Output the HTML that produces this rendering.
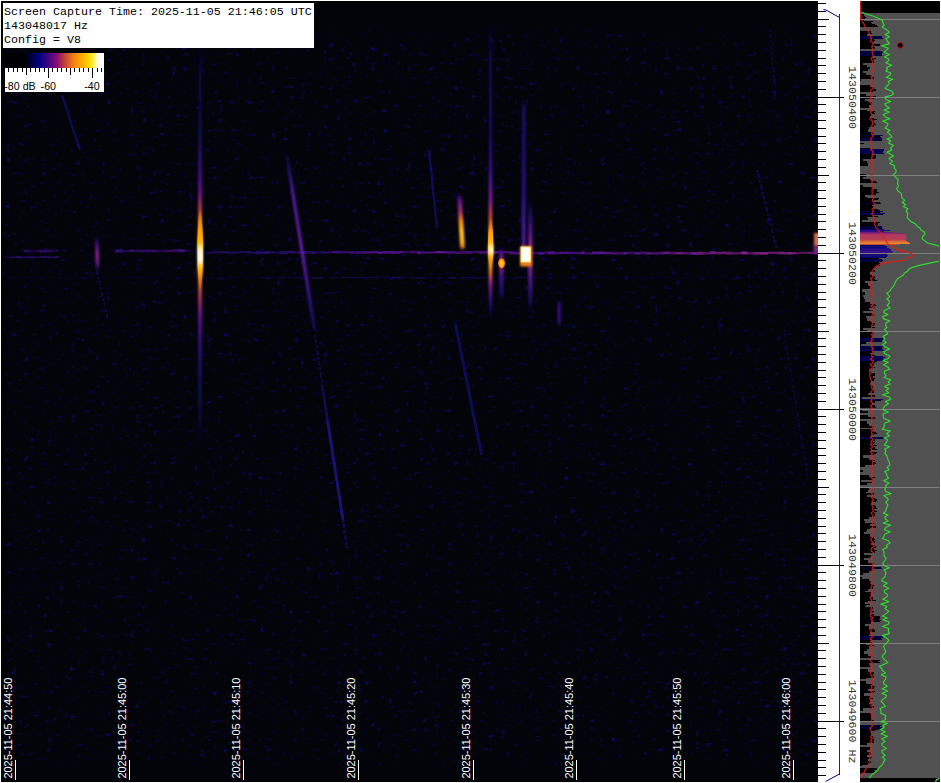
<!DOCTYPE html>
<html><head><meta charset="utf-8"><title>Spectrogram</title>
<style>
html,body{margin:0;padding:0;background:#fff;overflow:hidden}
svg{display:block}
.mono{font-family:"Liberation Mono","DejaVu Sans Mono",monospace;font-size:11.67px;fill:#000}
.sans{font-family:"Liberation Sans","DejaVu Sans",sans-serif;font-size:10.67px}
</style></head><body>
<svg width="941" height="783" viewBox="0 0 941 783">
<defs>
<filter id="noise" x="0" y="0" width="100%" height="100%" color-interpolation-filters="sRGB">
<feTurbulence type="fractalNoise" baseFrequency="0.17 0.21" numOctaves="2" seed="11" result="t"/>
<feColorMatrix in="t" type="matrix" values="0 0 0 0 0.035  0 0 0 0 0.035  0 0 0 0 0.45  3.5 0 0 0 -2.27"/>
</filter>
<filter id="b1" x="-50%" y="-5%" width="200%" height="110%"><feGaussianBlur stdDeviation="0.95 1.5"/></filter>
<filter id="b2" x="-20%" y="-20%" width="140%" height="140%"><feGaussianBlur stdDeviation="0.7"/></filter>
<filter id="b4" x="-50%" y="-30%" width="200%" height="160%"><feGaussianBlur stdDeviation="1"/></filter>
<filter id="b3" x="-5%" y="-100%" width="110%" height="300%"><feGaussianBlur stdDeviation="0.7 0.6"/></filter>
<linearGradient id="cbar" x1="0" x2="1" y1="0" y2="0">
<stop offset="0" stop-color="#000"/><stop offset="0.2" stop-color="#000004"/><stop offset="0.275" stop-color="#00004a"/><stop offset="0.345" stop-color="#020282"/>
<stop offset="0.43" stop-color="#3a0582"/><stop offset="0.52" stop-color="#860a78"/><stop offset="0.60" stop-color="#c0403a"/><stop offset="0.70" stop-color="#f58410"/>
<stop offset="0.79" stop-color="#ffb400"/><stop offset="0.87" stop-color="#ffe60a"/><stop offset="0.93" stop-color="#fffbd0"/><stop offset="0.95" stop-color="#fff"/><stop offset="1" stop-color="#fff"/>
</linearGradient>
</defs>
<rect x="0" y="0" width="941" height="783" fill="#fff"/>
<rect x="1" y="1" width="817" height="781" fill="#000"/>
<rect x="3" y="3" width="815" height="777" fill="#03030a"/>
<rect x="3" y="3" width="815" height="777" filter="url(#noise)"/>
<linearGradient id="fadeT" x1="0" y1="0" x2="0" y2="1"><stop offset="0" stop-color="#03030a" stop-opacity="1"/><stop offset="0.5" stop-color="#03030a" stop-opacity="1"/><stop offset="1" stop-color="#03030a" stop-opacity="0"/></linearGradient>
<linearGradient id="fadeB" x1="0" y1="0" x2="0" y2="1"><stop offset="0" stop-color="#03030a" stop-opacity="0"/><stop offset="0.6" stop-color="#03030a" stop-opacity="0.9"/><stop offset="1" stop-color="#03030a" stop-opacity="1"/></linearGradient>
<rect x="3" y="3" width="815" height="40" fill="url(#fadeT)"/><rect x="3" y="752" width="815" height="28" fill="url(#fadeB)"/>
<defs>
<linearGradient id="g1" x1="0" y1="0" x2="0" y2="1"><stop offset="0" stop-color="#201080" stop-opacity="0"/><stop offset="0.2" stop-color="#4a1490" stop-opacity="0.8"/><stop offset="0.5" stop-color="#8a2090" stop-opacity="1"/><stop offset="0.75" stop-color="#7a2090" stop-opacity="0.9"/><stop offset="1" stop-color="#201080" stop-opacity="0"/></linearGradient>
<linearGradient id="g2" x1="0" y1="0" x2="0" y2="1"><stop offset="0" stop-color="#1a1a8a" stop-opacity="0.0"/><stop offset="0.1" stop-color="#2a1a90" stop-opacity="0.55"/><stop offset="0.22" stop-color="#501a9c" stop-opacity="0.95"/><stop offset="0.55" stop-color="#621ea0" stop-opacity="1"/><stop offset="0.8" stop-color="#3e189a" stop-opacity="0.85"/><stop offset="1" stop-color="#1a1a90" stop-opacity="0.5"/></linearGradient>
<linearGradient id="g3" x1="0" y1="0" x2="0" y2="1"><stop offset="0" stop-color="#10108a" stop-opacity="0"/><stop offset="0.06" stop-color="#16128a" stop-opacity="0.3"/><stop offset="0.22" stop-color="#1c128c" stop-opacity="0.4"/><stop offset="0.3" stop-color="#3a1090" stop-opacity="0.7"/><stop offset="0.38" stop-color="#6a1490" stop-opacity="1"/><stop offset="0.42" stop-color="#b03a50" stop-opacity="1"/><stop offset="0.45" stop-color="#f08010" stop-opacity="1"/><stop offset="0.5" stop-color="#ffb000" stop-opacity="1"/><stop offset="0.53" stop-color="#ffb000" stop-opacity="1"/><stop offset="0.58" stop-color="#f08010" stop-opacity="1"/><stop offset="0.63" stop-color="#b03a50" stop-opacity="1"/><stop offset="0.68" stop-color="#6a1490" stop-opacity="1"/><stop offset="0.75" stop-color="#3a1090" stop-opacity="0.8"/><stop offset="0.85" stop-color="#1c128a" stop-opacity="0.5"/><stop offset="0.95" stop-color="#18128a" stop-opacity="0.3"/><stop offset="1" stop-color="#10108a" stop-opacity="0"/></linearGradient>
<linearGradient id="lens" x1="0" y1="0" x2="0" y2="1"><stop offset="0" stop-color="#f08010" stop-opacity="0.2"/><stop offset="0.25" stop-color="#ff9c08" stop-opacity="1"/><stop offset="0.5" stop-color="#ffc010" stop-opacity="1"/><stop offset="0.75" stop-color="#ff9c08" stop-opacity="1"/><stop offset="1" stop-color="#f08010" stop-opacity="0.2"/></linearGradient>
<linearGradient id="g4" x1="0" y1="0" x2="0" y2="1"><stop offset="0" stop-color="#ff9000" stop-opacity="0"/><stop offset="0.3" stop-color="#ffc000" stop-opacity="1"/><stop offset="0.4" stop-color="#fff0a0" stop-opacity="1"/><stop offset="0.5" stop-color="#fff" stop-opacity="1"/><stop offset="0.66" stop-color="#fff" stop-opacity="1"/><stop offset="0.75" stop-color="#ffd040" stop-opacity="1"/><stop offset="1" stop-color="#ff9000" stop-opacity="0"/></linearGradient>
<linearGradient id="g5" x1="0" y1="0" x2="0" y2="1"><stop offset="0" stop-color="#3a1090" stop-opacity="0"/><stop offset="0.12" stop-color="#5a1494" stop-opacity="0.9"/><stop offset="0.35" stop-color="#a03060" stop-opacity="1"/><stop offset="0.5" stop-color="#f08a10" stop-opacity="1"/><stop offset="0.68" stop-color="#ffc028" stop-opacity="1"/><stop offset="0.85" stop-color="#ffb820" stop-opacity="1"/><stop offset="0.95" stop-color="#f08a10" stop-opacity="1"/><stop offset="1" stop-color="#c04a30" stop-opacity="0.6"/></linearGradient>
<linearGradient id="g6" x1="0" y1="0" x2="0" y2="1"><stop offset="0" stop-color="#10108a" stop-opacity="0"/><stop offset="0.08" stop-color="#1c128c" stop-opacity="0.3"/><stop offset="0.4" stop-color="#2c1492" stop-opacity="0.5"/><stop offset="0.52" stop-color="#44149a" stop-opacity="0.85"/><stop offset="0.6" stop-color="#7a1a90" stop-opacity="1"/><stop offset="0.66" stop-color="#c04a40" stop-opacity="1"/><stop offset="0.72" stop-color="#f59010" stop-opacity="1"/><stop offset="0.76" stop-color="#ffc020" stop-opacity="1"/><stop offset="0.8" stop-color="#ffc020" stop-opacity="1"/><stop offset="0.84" stop-color="#e07020" stop-opacity="1"/><stop offset="0.88" stop-color="#8a2090" stop-opacity="1"/><stop offset="0.94" stop-color="#30128e" stop-opacity="0.7"/><stop offset="1" stop-color="#10108a" stop-opacity="0"/></linearGradient>
<linearGradient id="g7" x1="0" y1="0" x2="0" y2="1"><stop offset="0" stop-color="#ffb000" stop-opacity="0"/><stop offset="0.3" stop-color="#ffe680" stop-opacity="1"/><stop offset="0.5" stop-color="#fff" stop-opacity="1"/><stop offset="0.7" stop-color="#ffe680" stop-opacity="1"/><stop offset="1" stop-color="#ffb000" stop-opacity="0"/></linearGradient>
<linearGradient id="g8" x1="0" y1="0" x2="0" y2="1"><stop offset="0" stop-color="#30108a" stop-opacity="0"/><stop offset="0.12" stop-color="#4a1490" stop-opacity="0.8"/><stop offset="0.2" stop-color="#7a2080" stop-opacity="0.9"/><stop offset="0.42" stop-color="#7a2080" stop-opacity="0.9"/><stop offset="0.55" stop-color="#44149a" stop-opacity="0.8"/><stop offset="0.8" stop-color="#28149a" stop-opacity="0.6"/><stop offset="1" stop-color="#20108a" stop-opacity="0"/></linearGradient>
<radialGradient id="blobc"><stop offset="0" stop-color="#ffd030"/><stop offset="0.5" stop-color="#ffb818"/><stop offset="0.85" stop-color="#e87818"/><stop offset="1" stop-color="#c05030" stop-opacity="0.7"/></radialGradient>
<linearGradient id="g9" x1="0" y1="0" x2="0" y2="1"><stop offset="0" stop-color="#10108a" stop-opacity="0"/><stop offset="0.08" stop-color="#24149a" stop-opacity="0.5"/><stop offset="0.6" stop-color="#30169a" stop-opacity="0.7"/><stop offset="0.85" stop-color="#44189a" stop-opacity="0.9"/><stop offset="1" stop-color="#5a1a96" stop-opacity="0.95"/></linearGradient>
<linearGradient id="g10" x1="0" y1="0" x2="0" y2="1"><stop offset="0" stop-color="#10108a" stop-opacity="0"/><stop offset="0.15" stop-color="#2c128c" stop-opacity="0.7"/><stop offset="0.3" stop-color="#5a1a92" stop-opacity="0.9"/><stop offset="0.4" stop-color="#8a2488" stop-opacity="1"/><stop offset="0.58" stop-color="#8a2488" stop-opacity="1"/><stop offset="0.68" stop-color="#5a1a92" stop-opacity="0.9"/><stop offset="0.85" stop-color="#2c128c" stop-opacity="0.7"/><stop offset="1" stop-color="#10108a" stop-opacity="0"/></linearGradient>
<linearGradient id="g11" x1="0" y1="0" x2="0" y2="1"><stop offset="0" stop-color="#14148a" stop-opacity="0"/><stop offset="0.2" stop-color="#38149a" stop-opacity="0.9"/><stop offset="0.8" stop-color="#38149a" stop-opacity="0.9"/><stop offset="1" stop-color="#14148a" stop-opacity="0"/></linearGradient>
</defs>
<g clip-path="url(#spclip)">
<clipPath id="spclip"><rect x="3" y="3" width="815" height="777"/></clipPath>
<g filter="url(#b3)"><rect x="16.7" y="249.89" width="7.4" height="2.25" fill="#2c0b81" fill-opacity="0.06"/><rect x="23.8" y="249.51" width="6.3" height="2.83" fill="#391087" fill-opacity="0.61"/><rect x="29.8" y="249.77" width="6.5" height="2.68" fill="#3a1088" fill-opacity="0.37"/><rect x="36.0" y="249.91" width="4.5" height="2.56" fill="#3a1088" fill-opacity="0.36"/><rect x="40.1" y="249.57" width="6.8" height="3.00" fill="#3a1088" fill-opacity="0.64"/><rect x="46.6" y="249.35" width="5.0" height="3.02" fill="#3a1088" fill-opacity="0.60"/><rect x="51.2" y="249.45" width="7.6" height="2.31" fill="#3a1088" fill-opacity="0.36"/><rect x="58.6" y="249.80" width="8.1" height="2.40" fill="#2d0b82" fill-opacity="0.09"/><rect x="109.4" y="249.86" width="6.2" height="2.42" fill="#310d83" fill-opacity="0.17"/><rect x="115.3" y="249.37" width="7.6" height="3.08" fill="#3a1088" fill-opacity="0.77"/><rect x="122.7" y="249.91" width="4.5" height="2.13" fill="#3c1088" fill-opacity="0.42"/><rect x="126.9" y="249.86" width="3.9" height="2.25" fill="#3d1088" fill-opacity="0.56"/><rect x="130.4" y="249.23" width="3.0" height="3.04" fill="#3e1088" fill-opacity="0.74"/><rect x="133.2" y="249.56" width="7.7" height="2.61" fill="#3f1189" fill-opacity="0.55"/><rect x="140.6" y="249.59" width="6.3" height="2.71" fill="#411189" fill-opacity="0.64"/><rect x="146.7" y="249.44" width="8.0" height="2.81" fill="#421189" fill-opacity="0.61"/><rect x="154.3" y="249.98" width="4.1" height="2.61" fill="#441189" fill-opacity="0.53"/><rect x="158.1" y="249.50" width="5.8" height="2.67" fill="#451189" fill-opacity="0.42"/><rect x="163.6" y="249.93" width="2.9" height="2.16" fill="#461189" fill-opacity="0.67"/><rect x="166.3" y="249.82" width="6.3" height="2.45" fill="#47128a" fill-opacity="0.61"/><rect x="172.2" y="249.44" width="6.7" height="2.16" fill="#48128a" fill-opacity="0.73"/><rect x="178.6" y="249.43" width="6.5" height="2.55" fill="#4a128a" fill-opacity="0.83"/><rect x="184.8" y="249.59" width="6.1" height="2.41" fill="#3c0e86" fill-opacity="0.35"/><rect x="190.6" y="251.01" width="4.8" height="2.47" fill="#2e0b81" fill-opacity="0.18"/><rect x="195.1" y="251.05" width="7.0" height="2.82" fill="#2b0b82" fill-opacity="0.14"/><rect x="201.9" y="251.48" width="4.5" height="2.33" fill="#2d0d86" fill-opacity="0.29"/><rect x="206.1" y="251.46" width="3.8" height="2.20" fill="#2f0f88" fill-opacity="0.44"/><rect x="209.6" y="251.40" width="4.6" height="2.53" fill="#30108a" fill-opacity="0.48"/><rect x="213.9" y="250.90" width="7.5" height="2.74" fill="#30108a" fill-opacity="0.42"/><rect x="221.1" y="251.07" width="7.7" height="2.22" fill="#31108a" fill-opacity="0.53"/><rect x="228.4" y="251.18" width="5.7" height="2.92" fill="#31108a" fill-opacity="0.43"/><rect x="233.8" y="251.28" width="3.8" height="2.73" fill="#31108a" fill-opacity="0.47"/><rect x="237.4" y="250.91" width="7.2" height="2.39" fill="#32108a" fill-opacity="0.49"/><rect x="244.3" y="251.02" width="7.2" height="2.51" fill="#32108a" fill-opacity="0.47"/><rect x="251.2" y="251.61" width="5.1" height="2.25" fill="#33108a" fill-opacity="0.52"/><rect x="256.0" y="251.17" width="2.8" height="3.07" fill="#33108a" fill-opacity="0.72"/><rect x="258.5" y="251.58" width="5.2" height="2.32" fill="#33108a" fill-opacity="0.73"/><rect x="263.4" y="251.23" width="6.9" height="2.61" fill="#33108a" fill-opacity="0.69"/><rect x="270.0" y="251.10" width="4.4" height="2.17" fill="#34108a" fill-opacity="0.51"/><rect x="274.1" y="251.58" width="6.0" height="2.14" fill="#34108a" fill-opacity="0.49"/><rect x="279.8" y="251.25" width="7.8" height="2.98" fill="#34108a" fill-opacity="0.64"/><rect x="287.3" y="250.60" width="7.7" height="2.83" fill="#35108a" fill-opacity="0.60"/><rect x="294.7" y="251.22" width="3.7" height="2.61" fill="#35108a" fill-opacity="0.50"/><rect x="298.2" y="251.27" width="5.1" height="2.43" fill="#35108a" fill-opacity="0.75"/><rect x="302.9" y="250.95" width="4.2" height="2.87" fill="#36108a" fill-opacity="0.72"/><rect x="306.8" y="250.98" width="4.7" height="2.90" fill="#36108a" fill-opacity="0.47"/><rect x="311.3" y="251.29" width="3.7" height="2.89" fill="#36108a" fill-opacity="0.70"/><rect x="314.7" y="251.03" width="7.3" height="2.95" fill="#39108a" fill-opacity="0.41"/><rect x="321.7" y="250.91" width="3.1" height="2.62" fill="#3c118b" fill-opacity="0.54"/><rect x="324.5" y="251.57" width="5.1" height="2.10" fill="#3e118b" fill-opacity="0.64"/><rect x="329.3" y="251.02" width="3.1" height="2.17" fill="#40118b" fill-opacity="0.50"/><rect x="332.1" y="250.77" width="8.2" height="2.59" fill="#43118b" fill-opacity="0.85"/><rect x="340.0" y="250.91" width="4.5" height="2.73" fill="#46128c" fill-opacity="0.63"/><rect x="344.2" y="250.94" width="6.0" height="2.42" fill="#48128c" fill-opacity="0.67"/><rect x="350.0" y="251.34" width="3.5" height="2.47" fill="#4a128c" fill-opacity="0.77"/><rect x="353.1" y="250.95" width="3.2" height="2.69" fill="#4b128d" fill-opacity="0.59"/><rect x="356.1" y="251.29" width="7.1" height="2.71" fill="#4c128d" fill-opacity="0.69"/><rect x="362.9" y="251.00" width="5.2" height="2.79" fill="#4e138d" fill-opacity="0.69"/><rect x="367.8" y="251.20" width="5.1" height="2.34" fill="#4f138e" fill-opacity="0.85"/><rect x="372.6" y="250.80" width="5.7" height="2.52" fill="#50138e" fill-opacity="0.85"/><rect x="378.0" y="251.52" width="5.1" height="2.47" fill="#52138e" fill-opacity="0.94"/><rect x="382.9" y="250.93" width="7.7" height="2.55" fill="#53138f" fill-opacity="0.90"/><rect x="390.3" y="251.05" width="3.5" height="2.97" fill="#55138f" fill-opacity="0.91"/><rect x="393.5" y="251.26" width="7.2" height="2.65" fill="#56148f" fill-opacity="0.83"/><rect x="400.3" y="250.88" width="3.4" height="2.24" fill="#58148f" fill-opacity="0.79"/><rect x="403.4" y="250.97" width="7.1" height="2.20" fill="#591490" fill-opacity="0.52"/><rect x="410.2" y="250.56" width="7.6" height="2.92" fill="#5a1490" fill-opacity="0.59"/><rect x="417.5" y="251.08" width="3.5" height="2.92" fill="#5a1490" fill-opacity="0.92"/><rect x="420.7" y="251.57" width="8.0" height="2.14" fill="#5a1490" fill-opacity="0.79"/><rect x="428.4" y="251.47" width="7.0" height="2.20" fill="#5a1490" fill-opacity="0.76"/><rect x="435.1" y="250.84" width="6.9" height="2.42" fill="#5a1490" fill-opacity="0.97"/><rect x="441.8" y="251.06" width="5.9" height="2.28" fill="#5a1490" fill-opacity="0.91"/><rect x="447.4" y="251.36" width="4.2" height="2.49" fill="#5a1490" fill-opacity="0.81"/><rect x="451.2" y="251.03" width="4.8" height="2.51" fill="#5a1490" fill-opacity="0.70"/><rect x="455.8" y="251.53" width="3.3" height="2.50" fill="#5a1490" fill-opacity="0.75"/><rect x="458.7" y="251.13" width="6.9" height="2.84" fill="#5a1490" fill-opacity="0.58"/><rect x="465.3" y="251.02" width="6.5" height="2.73" fill="#5a1490" fill-opacity="0.76"/><rect x="471.5" y="250.66" width="7.7" height="2.83" fill="#5a1490" fill-opacity="0.57"/><rect x="479.0" y="250.95" width="7.8" height="2.80" fill="#5a1490" fill-opacity="0.76"/><rect x="486.5" y="250.82" width="3.8" height="2.67" fill="#591490" fill-opacity="0.63"/><rect x="490.0" y="251.04" width="4.5" height="3.03" fill="#581490" fill-opacity="0.62"/><rect x="494.3" y="250.86" width="4.4" height="2.94" fill="#571490" fill-opacity="0.85"/><rect x="498.4" y="251.11" width="6.0" height="2.12" fill="#551390" fill-opacity="0.63"/><rect x="504.1" y="250.91" width="5.4" height="2.45" fill="#541390" fill-opacity="0.69"/><rect x="509.2" y="251.28" width="4.6" height="3.07" fill="#521390" fill-opacity="0.89"/><rect x="513.5" y="251.62" width="5.4" height="2.92" fill="#511390" fill-opacity="0.80"/><rect x="518.7" y="251.68" width="7.3" height="2.81" fill="#4f1390" fill-opacity="0.78"/><rect x="525.7" y="251.77" width="7.5" height="3.04" fill="#4d1290" fill-opacity="0.70"/><rect x="532.9" y="251.49" width="5.4" height="2.80" fill="#4c1290" fill-opacity="0.61"/><rect x="538.0" y="252.21" width="6.5" height="2.34" fill="#4a1290" fill-opacity="0.98"/><rect x="544.2" y="251.45" width="3.8" height="2.79" fill="#4b1290" fill-opacity="0.63"/><rect x="547.7" y="251.43" width="7.5" height="2.95" fill="#4c1290" fill-opacity="0.95"/><rect x="554.9" y="252.19" width="4.5" height="2.18" fill="#4d1390" fill-opacity="0.71"/><rect x="559.2" y="251.71" width="3.3" height="2.45" fill="#4e1390" fill-opacity="0.92"/><rect x="562.2" y="251.49" width="6.0" height="2.43" fill="#4e1390" fill-opacity="0.84"/><rect x="567.9" y="251.53" width="5.2" height="2.67" fill="#4f1391" fill-opacity="0.74"/><rect x="572.8" y="252.03" width="8.1" height="2.22" fill="#511391" fill-opacity="0.70"/><rect x="580.5" y="251.31" width="4.3" height="2.97" fill="#521491" fill-opacity="0.83"/><rect x="584.5" y="252.22" width="7.8" height="2.47" fill="#531491" fill-opacity="0.55"/><rect x="592.0" y="251.56" width="7.0" height="2.76" fill="#541491" fill-opacity="0.88"/><rect x="598.8" y="251.49" width="6.4" height="2.84" fill="#551491" fill-opacity="0.90"/><rect x="604.9" y="252.02" width="8.1" height="2.21" fill="#561591" fill-opacity="0.84"/><rect x="612.7" y="251.89" width="5.5" height="2.76" fill="#581592" fill-opacity="0.68"/><rect x="617.9" y="251.86" width="5.9" height="2.72" fill="#591592" fill-opacity="0.59"/><rect x="623.5" y="252.11" width="3.8" height="2.22" fill="#5a1592" fill-opacity="0.94"/><rect x="627.0" y="251.56" width="7.9" height="2.81" fill="#5b1692" fill-opacity="0.57"/><rect x="634.6" y="251.94" width="6.1" height="2.55" fill="#5c1692" fill-opacity="0.78"/><rect x="640.4" y="251.35" width="4.5" height="2.80" fill="#5f1692" fill-opacity="0.59"/><rect x="644.6" y="252.07" width="6.9" height="2.45" fill="#631791" fill-opacity="0.77"/><rect x="651.2" y="252.33" width="4.3" height="2.14" fill="#671891" fill-opacity="0.69"/><rect x="655.2" y="252.09" width="5.6" height="2.45" fill="#6a1891" fill-opacity="0.62"/><rect x="660.5" y="251.71" width="4.6" height="2.86" fill="#6e1991" fill-opacity="0.70"/><rect x="664.8" y="251.61" width="4.7" height="2.37" fill="#711990" fill-opacity="0.92"/><rect x="669.3" y="251.92" width="3.3" height="2.81" fill="#741a90" fill-opacity="0.56"/><rect x="672.3" y="251.62" width="3.8" height="2.83" fill="#751a90" fill-opacity="0.59"/><rect x="675.8" y="252.05" width="7.3" height="2.24" fill="#761b90" fill-opacity="0.87"/><rect x="682.8" y="251.79" width="5.0" height="2.66" fill="#771b90" fill-opacity="0.60"/><rect x="687.5" y="252.26" width="3.9" height="2.13" fill="#781c8f" fill-opacity="0.63"/><rect x="691.1" y="252.22" width="7.2" height="2.48" fill="#7a1c8f" fill-opacity="0.95"/><rect x="698.0" y="251.68" width="5.8" height="3.06" fill="#7b1d8f" fill-opacity="0.79"/><rect x="703.6" y="252.10" width="6.6" height="2.57" fill="#7d1d8f" fill-opacity="0.65"/><rect x="709.8" y="251.27" width="6.1" height="2.86" fill="#7e1e8f" fill-opacity="0.86"/><rect x="715.7" y="251.84" width="6.4" height="2.55" fill="#801e8f" fill-opacity="0.75"/><rect x="721.8" y="251.43" width="3.9" height="2.59" fill="#811f8e" fill-opacity="0.76"/><rect x="725.4" y="251.63" width="6.4" height="3.04" fill="#821f8e" fill-opacity="0.72"/><rect x="731.4" y="251.98" width="7.7" height="2.71" fill="#84208e" fill-opacity="0.57"/><rect x="738.8" y="251.80" width="3.1" height="2.18" fill="#84208e" fill-opacity="0.68"/><rect x="741.6" y="251.48" width="5.8" height="2.95" fill="#85208e" fill-opacity="0.96"/><rect x="747.1" y="252.04" width="6.6" height="2.69" fill="#85208e" fill-opacity="0.57"/><rect x="753.4" y="252.07" width="7.9" height="2.44" fill="#86218e" fill-opacity="0.86"/><rect x="761.0" y="252.13" width="7.2" height="2.53" fill="#87218e" fill-opacity="0.97"/><rect x="767.9" y="251.72" width="7.0" height="2.14" fill="#87218e" fill-opacity="0.74"/><rect x="774.6" y="251.54" width="3.2" height="2.59" fill="#88218e" fill-opacity="0.60"/><rect x="777.5" y="251.67" width="6.6" height="2.74" fill="#88218e" fill-opacity="0.77"/><rect x="783.9" y="252.06" width="4.5" height="2.49" fill="#89218e" fill-opacity="0.73"/><rect x="788.0" y="252.05" width="3.8" height="2.46" fill="#89218e" fill-opacity="0.95"/><rect x="791.5" y="252.02" width="4.8" height="2.32" fill="#8a218e" fill-opacity="0.76"/><rect x="796.1" y="252.21" width="2.8" height="2.24" fill="#8a218e" fill-opacity="0.60"/><rect x="798.6" y="251.73" width="5.3" height="2.27" fill="#8a228e" fill-opacity="0.60"/><rect x="803.6" y="251.62" width="5.0" height="2.21" fill="#8b228e" fill-opacity="0.58"/><rect x="808.3" y="251.69" width="3.7" height="2.12" fill="#8b228e" fill-opacity="0.75"/><rect x="811.8" y="252.19" width="5.3" height="2.15" fill="#8c228e" fill-opacity="0.70"/><rect x="816.7" y="251.20" width="1.6" height="3.05" fill="#8c228e" fill-opacity="0.70"/></g>
<g filter="url(#b3)"><rect x="3.0" y="256.00" width="4.0" height="1.99" fill="#2d0c83" fill-opacity="0.24"/><rect x="6.7" y="256.88" width="3.3" height="1.65" fill="#330f89" fill-opacity="0.43"/><rect x="9.7" y="256.34" width="6.3" height="1.85" fill="#34108a" fill-opacity="0.57"/><rect x="15.7" y="256.14" width="3.9" height="1.66" fill="#34108a" fill-opacity="0.70"/><rect x="19.3" y="256.16" width="2.9" height="2.13" fill="#34108a" fill-opacity="0.48"/><rect x="21.9" y="256.01" width="4.9" height="2.19" fill="#34108a" fill-opacity="0.42"/><rect x="26.5" y="256.22" width="3.1" height="1.96" fill="#34108a" fill-opacity="0.61"/><rect x="29.3" y="256.32" width="4.7" height="1.95" fill="#34108a" fill-opacity="0.63"/><rect x="33.7" y="256.24" width="7.8" height="1.55" fill="#34108a" fill-opacity="0.59"/><rect x="41.2" y="255.97" width="8.0" height="2.16" fill="#34108a" fill-opacity="0.54"/><rect x="48.9" y="256.75" width="6.0" height="1.70" fill="#34108a" fill-opacity="0.62"/><rect x="54.6" y="255.99" width="4.8" height="2.04" fill="#330f89" fill-opacity="0.59"/><rect x="59.0" y="256.38" width="3.3" height="2.16" fill="#2d0c83" fill-opacity="0.15"/></g>
<g filter="url(#b3)"><rect x="3.0" y="276.36" width="5.3" height="1.90" fill="#10106a" fill-opacity="0.15"/><rect x="8.0" y="277.22" width="2.8" height="1.40" fill="#10106a" fill-opacity="0.18"/><rect x="10.6" y="276.44" width="5.8" height="1.59" fill="#10106b" fill-opacity="0.21"/><rect x="16.1" y="277.06" width="6.7" height="1.45" fill="#10106b" fill-opacity="0.17"/><rect x="22.5" y="276.64" width="4.1" height="1.93" fill="#10106b" fill-opacity="0.09"/><rect x="26.3" y="276.60" width="6.0" height="1.82" fill="#10106b" fill-opacity="0.25"/><rect x="32.1" y="276.84" width="3.4" height="1.81" fill="#11116c" fill-opacity="0.13"/><rect x="35.1" y="276.67" width="5.1" height="1.48" fill="#11116c" fill-opacity="0.08"/><rect x="39.9" y="276.41" width="4.3" height="1.91" fill="#11116c" fill-opacity="0.25"/><rect x="44.0" y="276.67" width="7.6" height="1.66" fill="#11116d" fill-opacity="0.07"/><rect x="51.3" y="277.21" width="2.9" height="1.42" fill="#11116d" fill-opacity="0.16"/><rect x="53.9" y="276.71" width="6.1" height="1.91" fill="#11116d" fill-opacity="0.09"/><rect x="59.7" y="276.42" width="3.9" height="1.69" fill="#11116d" fill-opacity="0.06"/><rect x="63.3" y="276.63" width="2.9" height="1.93" fill="#11116e" fill-opacity="0.08"/><rect x="65.9" y="277.01" width="5.1" height="1.41" fill="#11116e" fill-opacity="0.16"/><rect x="70.8" y="276.71" width="6.0" height="1.95" fill="#11116e" fill-opacity="0.10"/><rect x="76.4" y="276.96" width="3.1" height="1.44" fill="#11116e" fill-opacity="0.19"/><rect x="79.2" y="277.29" width="4.3" height="1.43" fill="#11116e" fill-opacity="0.30"/><rect x="83.2" y="276.52" width="6.7" height="1.74" fill="#11116f" fill-opacity="0.29"/><rect x="89.6" y="276.88" width="3.0" height="1.72" fill="#11116f" fill-opacity="0.15"/><rect x="92.3" y="276.53" width="7.1" height="1.89" fill="#12126f" fill-opacity="0.08"/><rect x="99.1" y="276.54" width="6.0" height="1.97" fill="#121270" fill-opacity="0.17"/><rect x="104.8" y="277.06" width="6.0" height="1.56" fill="#121270" fill-opacity="0.06"/><rect x="110.5" y="276.78" width="5.2" height="1.55" fill="#121270" fill-opacity="0.11"/><rect x="115.3" y="276.36" width="3.3" height="1.84" fill="#121271" fill-opacity="0.21"/><rect x="118.3" y="277.01" width="2.9" height="1.66" fill="#121271" fill-opacity="0.25"/><rect x="121.0" y="276.98" width="6.7" height="1.62" fill="#121271" fill-opacity="0.12"/><rect x="127.4" y="276.73" width="4.1" height="1.58" fill="#121271" fill-opacity="0.29"/><rect x="131.2" y="277.01" width="7.5" height="1.46" fill="#121272" fill-opacity="0.15"/><rect x="138.4" y="276.26" width="7.4" height="1.96" fill="#121272" fill-opacity="0.12"/><rect x="145.5" y="277.12" width="3.8" height="1.73" fill="#121272" fill-opacity="0.29"/><rect x="149.0" y="276.57" width="2.9" height="1.59" fill="#121272" fill-opacity="0.07"/><rect x="151.5" y="276.76" width="6.2" height="1.44" fill="#121273" fill-opacity="0.29"/><rect x="157.4" y="276.42" width="5.9" height="1.70" fill="#131373" fill-opacity="0.09"/><rect x="163.0" y="276.66" width="6.6" height="1.79" fill="#131373" fill-opacity="0.08"/><rect x="169.3" y="277.18" width="7.0" height="1.46" fill="#131374" fill-opacity="0.15"/><rect x="176.0" y="277.07" width="6.7" height="1.66" fill="#131374" fill-opacity="0.25"/><rect x="182.5" y="276.89" width="3.3" height="1.46" fill="#131374" fill-opacity="0.07"/><rect x="185.5" y="277.08" width="6.3" height="1.49" fill="#131375" fill-opacity="0.08"/><rect x="191.5" y="276.71" width="2.9" height="1.70" fill="#131375" fill-opacity="0.10"/><rect x="194.0" y="276.61" width="4.9" height="1.95" fill="#131375" fill-opacity="0.10"/><rect x="198.7" y="276.24" width="5.7" height="1.98" fill="#131375" fill-opacity="0.29"/><rect x="204.1" y="276.77" width="7.7" height="1.69" fill="#131376" fill-opacity="0.19"/><rect x="211.5" y="276.87" width="7.8" height="1.69" fill="#131376" fill-opacity="0.08"/><rect x="219.0" y="277.07" width="4.5" height="1.42" fill="#141476" fill-opacity="0.23"/><rect x="223.2" y="276.72" width="6.6" height="1.75" fill="#141477" fill-opacity="0.17"/><rect x="229.5" y="276.55" width="3.1" height="1.90" fill="#141477" fill-opacity="0.20"/><rect x="232.3" y="276.91" width="4.1" height="1.74" fill="#141477" fill-opacity="0.26"/><rect x="236.1" y="276.81" width="7.6" height="1.74" fill="#141478" fill-opacity="0.07"/><rect x="243.4" y="276.52" width="6.5" height="1.47" fill="#141478" fill-opacity="0.16"/><rect x="249.6" y="276.47" width="6.1" height="1.57" fill="#141478" fill-opacity="0.11"/><rect x="255.5" y="276.30" width="5.4" height="1.84" fill="#141479" fill-opacity="0.20"/><rect x="260.5" y="276.23" width="4.6" height="1.95" fill="#151579" fill-opacity="0.27"/><rect x="264.9" y="277.05" width="6.0" height="1.87" fill="#15157a" fill-opacity="0.33"/><rect x="270.6" y="276.46" width="3.4" height="1.84" fill="#15157a" fill-opacity="0.17"/><rect x="273.7" y="276.58" width="3.9" height="1.43" fill="#15157a" fill-opacity="0.13"/><rect x="277.3" y="276.59" width="8.0" height="1.82" fill="#15157b" fill-opacity="0.36"/><rect x="284.9" y="276.62" width="5.4" height="1.75" fill="#16167b" fill-opacity="0.24"/><rect x="290.0" y="276.88" width="4.1" height="1.47" fill="#16167c" fill-opacity="0.16"/><rect x="293.8" y="276.51" width="5.2" height="1.42" fill="#16167c" fill-opacity="0.38"/><rect x="298.7" y="276.46" width="7.2" height="1.89" fill="#16167c" fill-opacity="0.10"/><rect x="305.6" y="276.49" width="6.1" height="1.52" fill="#16167d" fill-opacity="0.16"/><rect x="311.4" y="277.06" width="4.5" height="1.85" fill="#17177d" fill-opacity="0.37"/><rect x="315.6" y="276.94" width="7.8" height="1.93" fill="#17177e" fill-opacity="0.42"/><rect x="323.1" y="276.70" width="8.1" height="1.51" fill="#17177f" fill-opacity="0.13"/><rect x="330.9" y="276.54" width="6.1" height="1.88" fill="#18187f" fill-opacity="0.28"/><rect x="336.7" y="276.60" width="5.0" height="1.64" fill="#18187f" fill-opacity="0.18"/><rect x="341.4" y="276.82" width="6.2" height="1.47" fill="#181880" fill-opacity="0.33"/><rect x="347.3" y="276.49" width="5.0" height="1.69" fill="#181880" fill-opacity="0.23"/><rect x="352.0" y="277.01" width="3.8" height="1.44" fill="#181880" fill-opacity="0.38"/><rect x="355.5" y="276.69" width="6.2" height="1.73" fill="#181880" fill-opacity="0.23"/><rect x="361.4" y="277.05" width="7.0" height="1.48" fill="#181880" fill-opacity="0.45"/><rect x="368.1" y="276.37" width="5.8" height="1.70" fill="#181880" fill-opacity="0.23"/><rect x="373.6" y="276.52" width="5.4" height="1.88" fill="#181880" fill-opacity="0.44"/><rect x="378.7" y="277.01" width="5.6" height="1.53" fill="#181880" fill-opacity="0.14"/><rect x="384.0" y="276.24" width="5.7" height="1.93" fill="#181880" fill-opacity="0.12"/><rect x="389.5" y="276.63" width="3.0" height="1.41" fill="#181880" fill-opacity="0.15"/><rect x="392.2" y="276.92" width="7.3" height="1.60" fill="#181880" fill-opacity="0.48"/><rect x="399.2" y="276.42" width="7.7" height="1.78" fill="#181880" fill-opacity="0.29"/><rect x="406.6" y="276.66" width="4.8" height="1.59" fill="#181880" fill-opacity="0.20"/><rect x="411.1" y="277.04" width="3.8" height="1.71" fill="#181880" fill-opacity="0.33"/><rect x="414.6" y="276.39" width="2.9" height="1.65" fill="#181880" fill-opacity="0.36"/><rect x="417.1" y="277.01" width="7.6" height="1.83" fill="#181880" fill-opacity="0.35"/><rect x="424.4" y="276.67" width="4.3" height="1.78" fill="#181880" fill-opacity="0.15"/><rect x="428.4" y="277.01" width="4.1" height="1.57" fill="#181880" fill-opacity="0.22"/><rect x="432.2" y="277.26" width="6.1" height="1.37" fill="#181880" fill-opacity="0.30"/><rect x="438.0" y="277.03" width="3.8" height="1.41" fill="#181880" fill-opacity="0.38"/><rect x="441.5" y="276.68" width="3.5" height="1.92" fill="#181880" fill-opacity="0.17"/><rect x="444.7" y="276.94" width="4.0" height="1.62" fill="#181880" fill-opacity="0.17"/><rect x="448.4" y="277.05" width="7.5" height="1.80" fill="#181880" fill-opacity="0.46"/><rect x="455.6" y="277.05" width="5.5" height="1.60" fill="#181880" fill-opacity="0.11"/><rect x="460.8" y="277.12" width="5.3" height="1.70" fill="#181880" fill-opacity="0.32"/><rect x="465.9" y="276.48" width="7.8" height="1.57" fill="#181880" fill-opacity="0.44"/><rect x="473.4" y="277.24" width="7.7" height="1.47" fill="#181880" fill-opacity="0.37"/><rect x="480.8" y="276.75" width="5.7" height="1.77" fill="#181880" fill-opacity="0.43"/><rect x="486.2" y="276.30" width="8.2" height="1.89" fill="#181880" fill-opacity="0.15"/><rect x="494.1" y="277.10" width="6.0" height="1.53" fill="#18187f" fill-opacity="0.16"/><rect x="499.8" y="276.43" width="3.5" height="1.61" fill="#18187e" fill-opacity="0.19"/><rect x="503.0" y="277.28" width="7.1" height="1.38" fill="#17177d" fill-opacity="0.23"/><rect x="509.8" y="276.92" width="3.8" height="1.48" fill="#17177c" fill-opacity="0.13"/><rect x="513.2" y="276.72" width="6.5" height="1.88" fill="#17177b" fill-opacity="0.24"/><rect x="519.4" y="276.53" width="7.1" height="1.59" fill="#16167a" fill-opacity="0.35"/><rect x="526.3" y="276.60" width="8.1" height="1.65" fill="#161679" fill-opacity="0.18"/><rect x="534.0" y="277.00" width="3.8" height="1.41" fill="#161677" fill-opacity="0.30"/><rect x="537.5" y="276.53" width="8.1" height="1.74" fill="#161676" fill-opacity="0.20"/><rect x="545.3" y="276.47" width="8.0" height="1.47" fill="#151575" fill-opacity="0.15"/><rect x="553.1" y="276.51" width="3.1" height="1.89" fill="#151574" fill-opacity="0.18"/><rect x="555.9" y="276.86" width="3.9" height="1.43" fill="#151573" fill-opacity="0.06"/><rect x="559.5" y="276.47" width="4.5" height="1.75" fill="#151572" fill-opacity="0.11"/><rect x="563.7" y="276.93" width="7.9" height="1.55" fill="#141471" fill-opacity="0.13"/><rect x="571.4" y="276.31" width="7.8" height="1.82" fill="#141470" fill-opacity="0.16"/><rect x="578.9" y="276.28" width="4.0" height="1.88" fill="#141470" fill-opacity="0.06"/><rect x="582.6" y="276.75" width="6.7" height="1.79" fill="#141470" fill-opacity="0.12"/><rect x="589.0" y="276.80" width="3.2" height="1.94" fill="#141470" fill-opacity="0.19"/><rect x="591.9" y="276.67" width="3.1" height="1.88" fill="#141470" fill-opacity="0.16"/><rect x="594.7" y="277.13" width="4.8" height="1.57" fill="#14146f" fill-opacity="0.18"/><rect x="599.2" y="276.25" width="5.6" height="1.96" fill="#14146f" fill-opacity="0.22"/><rect x="604.5" y="276.50" width="4.5" height="1.85" fill="#13136f" fill-opacity="0.14"/><rect x="608.8" y="276.33" width="5.7" height="1.90" fill="#13136f" fill-opacity="0.19"/><rect x="614.2" y="276.62" width="7.3" height="1.51" fill="#13136f" fill-opacity="0.18"/><rect x="621.2" y="277.16" width="5.3" height="1.61" fill="#13136f" fill-opacity="0.06"/><rect x="626.2" y="276.79" width="8.0" height="1.85" fill="#13136f" fill-opacity="0.08"/><rect x="633.9" y="276.40" width="6.3" height="1.62" fill="#13136e" fill-opacity="0.13"/><rect x="640.0" y="277.00" width="4.9" height="1.95" fill="#13136e" fill-opacity="0.23"/><rect x="644.6" y="276.46" width="8.2" height="1.53" fill="#13136e" fill-opacity="0.08"/><rect x="652.5" y="276.92" width="2.8" height="1.48" fill="#13136e" fill-opacity="0.07"/><rect x="655.1" y="276.44" width="6.2" height="1.96" fill="#13136e" fill-opacity="0.12"/><rect x="660.9" y="276.74" width="3.8" height="1.77" fill="#13136e" fill-opacity="0.21"/><rect x="664.4" y="277.17" width="3.6" height="1.47" fill="#12126e" fill-opacity="0.18"/><rect x="667.7" y="276.67" width="5.4" height="1.82" fill="#12126e" fill-opacity="0.17"/><rect x="672.8" y="276.83" width="6.3" height="1.84" fill="#12126d" fill-opacity="0.10"/><rect x="678.9" y="276.88" width="5.3" height="1.65" fill="#12126d" fill-opacity="0.15"/><rect x="683.9" y="276.92" width="3.3" height="1.81" fill="#12126d" fill-opacity="0.12"/><rect x="686.9" y="276.83" width="3.2" height="1.69" fill="#12126d" fill-opacity="0.13"/><rect x="689.8" y="276.91" width="3.6" height="1.69" fill="#12126d" fill-opacity="0.16"/><rect x="693.2" y="276.45" width="8.0" height="1.53" fill="#12126d" fill-opacity="0.15"/><rect x="700.8" y="277.08" width="6.7" height="1.79" fill="#12126d" fill-opacity="0.06"/><rect x="707.2" y="276.26" width="7.0" height="1.90" fill="#12126d" fill-opacity="0.07"/><rect x="713.9" y="276.70" width="5.6" height="1.83" fill="#12126c" fill-opacity="0.12"/><rect x="719.2" y="276.35" width="4.8" height="1.97" fill="#12126c" fill-opacity="0.18"/><rect x="723.7" y="276.63" width="6.6" height="1.91" fill="#11116c" fill-opacity="0.10"/><rect x="730.1" y="276.95" width="4.6" height="1.96" fill="#11116c" fill-opacity="0.17"/><rect x="734.4" y="276.76" width="4.2" height="1.86" fill="#11116c" fill-opacity="0.18"/><rect x="738.3" y="276.63" width="3.2" height="1.86" fill="#11116c" fill-opacity="0.11"/><rect x="741.2" y="276.43" width="5.3" height="1.87" fill="#11116c" fill-opacity="0.05"/><rect x="746.1" y="276.35" width="7.7" height="1.84" fill="#11116c" fill-opacity="0.14"/><rect x="753.5" y="276.82" width="7.6" height="1.53" fill="#11116b" fill-opacity="0.09"/><rect x="760.8" y="276.62" width="3.1" height="1.40" fill="#11116b" fill-opacity="0.17"/><rect x="763.6" y="276.88" width="7.8" height="1.86" fill="#11116b" fill-opacity="0.06"/><rect x="771.1" y="276.48" width="4.2" height="1.80" fill="#11116b" fill-opacity="0.10"/><rect x="774.9" y="276.75" width="8.2" height="1.69" fill="#11116b" fill-opacity="0.17"/><rect x="782.8" y="276.66" width="5.0" height="1.50" fill="#11116b" fill-opacity="0.16"/><rect x="787.5" y="277.09" width="6.6" height="1.81" fill="#10106b" fill-opacity="0.08"/><rect x="793.9" y="276.96" width="3.8" height="1.43" fill="#10106b" fill-opacity="0.04"/><rect x="797.4" y="277.05" width="5.5" height="1.59" fill="#10106a" fill-opacity="0.14"/><rect x="802.6" y="276.53" width="5.8" height="1.56" fill="#10106a" fill-opacity="0.17"/><rect x="808.1" y="277.24" width="7.2" height="1.40" fill="#10106a" fill-opacity="0.10"/><rect x="815.1" y="276.78" width="3.2" height="1.58" fill="#10106a" fill-opacity="0.10"/></g>
<line x1="62" y1="95" x2="80" y2="150" stroke="#18189a" stroke-width="2.4" stroke-opacity="0.48" stroke-dasharray="none" filter="url(#b2)"/>
<line x1="93" y1="255" x2="108" y2="320" stroke="#14148a" stroke-width="2" stroke-opacity="0.40" stroke-dasharray="2.5 1.5 4 2 3 2.5 5 2" filter="url(#b2)"/>
<line x1="429" y1="150" x2="437" y2="228" stroke="#1a1a98" stroke-width="2.4" stroke-opacity="0.48" stroke-dasharray="none" filter="url(#b2)"/>
<line x1="455.5" y1="324" x2="481.5" y2="455" stroke="#1c1ca0" stroke-width="2.8" stroke-opacity="0.50" stroke-dasharray="none" filter="url(#b2)"/>
<line x1="315" y1="335" x2="322" y2="383" stroke="#1a1a90" stroke-width="2.2" stroke-opacity="0.40" stroke-dasharray="2.5 1.5 4 2 3 2.5 5 2" filter="url(#b2)"/>
<line x1="322" y1="385" x2="327.5" y2="420" stroke="#2018a0" stroke-width="2.6" stroke-opacity="0.44" stroke-dasharray="none" filter="url(#b2)"/>
<line x1="327.5" y1="420" x2="343" y2="520" stroke="#2a1cb0" stroke-width="3" stroke-opacity="0.60" stroke-dasharray="none" filter="url(#b2)"/>
<line x1="343" y1="520" x2="347" y2="548" stroke="#2018a0" stroke-width="2.4" stroke-opacity="0.48" stroke-dasharray="2.5 1.5 4 2 3 2.5 5 2" filter="url(#b2)"/>
<line x1="770" y1="30" x2="776" y2="100" stroke="#14148a" stroke-width="2" stroke-opacity="0.32" stroke-dasharray="2.5 1.5 4 2 3 2.5 5 2" filter="url(#b2)"/>
<line x1="784" y1="330" x2="808" y2="480" stroke="#14148a" stroke-width="2" stroke-opacity="0.32" stroke-dasharray="2.5 1.5 4 2 3 2.5 5 2" filter="url(#b2)"/>
<line x1="757" y1="170" x2="777" y2="250" stroke="#20189a" stroke-width="2.2" stroke-opacity="0.40" stroke-dasharray="2.5 1.5 4 2 3 2.5 5 2" filter="url(#b2)"/>
<polygon points="94.8,236 98.2,236 99.7,272 96.3,272" fill="url(#g1)" filter="url(#b1)"/>
<polygon points="284.35,150 287.65,150 316.25,330 312.95000000000005,330" fill="url(#g2)" filter="url(#b1)"/>
<polygon points="198.2,38 201.8,38 201.8,445 198.2,445" fill="url(#g3)" filter="url(#b1)"/>
<ellipse cx="200.2" cy="250" rx="2.7" ry="40" fill="url(#lens)" filter="url(#b2)"/>
<polygon points="197.70000000000002,228 202.9,228 202.9,278 197.70000000000002,278" fill="url(#g4)" filter="url(#b1)"/>
<polygon points="457.0,193 461.6,193 464.90000000000003,249 460.3,249" fill="url(#g5)" filter="url(#b1)"/>
<polygon points="488.7,18 492.3,18 492.3,320 488.7,320" fill="url(#g6)" filter="url(#b1)"/>
<ellipse cx="490.7" cy="245" rx="2.6" ry="26" fill="url(#lens)" filter="url(#b2)"/>
<polygon points="488.5,241 493.5,241 493.5,259 488.5,259" fill="url(#g7)" filter="url(#b1)"/>
<polygon points="499.2,246 503.59999999999997,246 503.59999999999997,302 499.2,302" fill="url(#g8)" filter="url(#b1)"/>
<ellipse cx="501.6" cy="263.2" rx="3.6" ry="5.2" fill="url(#blobc)" filter="url(#b2)"/>
<polygon points="521.7,98 525.7,98 525.7,250 521.7,250" fill="url(#g9)" filter="url(#b1)"/>
<polygon points="528.1999999999999,200 532.4,200 532.4,313 528.1999999999999,313" fill="url(#g10)" filter="url(#b1)"/>
<rect x="520" y="246" width="12" height="20.5" rx="1.5" fill="#e8801c" filter="url(#b4)"/>
<rect x="520.6" y="246.6" width="10.4" height="16" rx="1" fill="#ffe070" filter="url(#b2)"/>
<rect x="521.2" y="247.4" width="8.8" height="14" rx="1" fill="#fffef0" filter="url(#b2)"/>
<polygon points="557.8,299 560.8,299 560.8,327 557.8,327" fill="url(#g11)" filter="url(#b1)"/>
<rect x="814" y="233" width="6" height="13.5" fill="#d8684a" filter="url(#b4)"/>
<rect x="813.5" y="246" width="6" height="7" fill="#7a2090" filter="url(#b4)"/>
</g>
<rect x="3" y="3" width="311" height="45" fill="#fff"/>
<text class="mono" x="4" y="15" xml:space="preserve">Screen Capture Time: 2025-11-05 21:46:05 UTC</text>
<text class="mono" x="4" y="29">143048017 Hz</text>
<text class="mono" x="4" y="43">Config = V8</text>
<rect x="5" y="53" width="99" height="15" fill="url(#cbar)"/>
<rect x="5" y="68" width="99" height="24" fill="#fff"/>
<g shape-rendering="crispEdges" fill="#000">
<rect x="8" y="68" width="1" height="4"/><rect x="13" y="68" width="1" height="4"/><rect x="17" y="68" width="1" height="4"/><rect x="22" y="68" width="1" height="4"/><rect x="26" y="68" width="1" height="7"/><rect x="30" y="68" width="1" height="4"/><rect x="35" y="68" width="1" height="4"/><rect x="39" y="68" width="1" height="4"/><rect x="44" y="68" width="1" height="4"/><rect x="48" y="68" width="1" height="10"/><rect x="52" y="68" width="1" height="4"/><rect x="57" y="68" width="1" height="4"/><rect x="61" y="68" width="1" height="4"/><rect x="66" y="68" width="1" height="4"/><rect x="70" y="68" width="1" height="7"/><rect x="74" y="68" width="1" height="4"/><rect x="79" y="68" width="1" height="4"/><rect x="83" y="68" width="1" height="4"/><rect x="88" y="68" width="1" height="4"/><rect x="92" y="68" width="1" height="10"/><rect x="97" y="68" width="1" height="4"/><rect x="101" y="68" width="1" height="4"/>
</g>
<clipPath id="cbclip"><rect x="5" y="68" width="99" height="24"/></clipPath>
<g clip-path="url(#cbclip)" class="sans" fill="#000"><text x="4.3" y="89.5">-80 dB</text><text x="48.3" y="89.5" text-anchor="middle">-60</text><text x="92" y="89.5" text-anchor="middle">-40</text></g>
<g class="sans" fill="#fff" style="font-size:10.97px">
<rect x="15" y="760" width="1" height="20" fill="#fff" shape-rendering="crispEdges"/><text transform="translate(12.4,778.6) rotate(-90)" xml:space="preserve">2025-11-05 21:44:50</text>
<rect x="129" y="760" width="1" height="20" fill="#fff" shape-rendering="crispEdges"/><text transform="translate(126.4,778.6) rotate(-90)" xml:space="preserve">2025-11-05 21:45:00</text>
<rect x="243" y="760" width="1" height="20" fill="#fff" shape-rendering="crispEdges"/><text transform="translate(240.4,778.6) rotate(-90)" xml:space="preserve">2025-11-05 21:45:10</text>
<rect x="358" y="760" width="1" height="20" fill="#fff" shape-rendering="crispEdges"/><text transform="translate(355.4,778.6) rotate(-90)" xml:space="preserve">2025-11-05 21:45:20</text>
<rect x="473" y="760" width="1" height="20" fill="#fff" shape-rendering="crispEdges"/><text transform="translate(470.4,778.6) rotate(-90)" xml:space="preserve">2025-11-05 21:45:30</text>
<rect x="576" y="760" width="1" height="20" fill="#fff" shape-rendering="crispEdges"/><text transform="translate(573.4,778.6) rotate(-90)" xml:space="preserve">2025-11-05 21:45:40</text>
<rect x="684" y="760" width="1" height="20" fill="#fff" shape-rendering="crispEdges"/><text transform="translate(681.4,778.6) rotate(-90)" xml:space="preserve">2025-11-05 21:45:50</text>
<rect x="793" y="760" width="1" height="20" fill="#fff" shape-rendering="crispEdges"/><text transform="translate(790.4,778.6) rotate(-90)" xml:space="preserve">2025-11-05 21:46:00</text>
</g>
<rect x="818" y="0" width="42" height="783" fill="#fff"/>
<g shape-rendering="crispEdges" fill="#000">
<rect x="818" y="3" width="8" height="1"/><rect x="818" y="11" width="8" height="1"/><rect x="818" y="19" width="11" height="1"/><rect x="818" y="26" width="8" height="1"/><rect x="818" y="34" width="8" height="1"/><rect x="818" y="42" width="8" height="1"/><rect x="818" y="50" width="8" height="1"/><rect x="818" y="58" width="8" height="1"/><rect x="818" y="65" width="8" height="1"/><rect x="818" y="73" width="8" height="1"/><rect x="818" y="81" width="8" height="1"/><rect x="818" y="89" width="8" height="1"/><rect x="818" y="97" width="26" height="1"/><rect x="818" y="104" width="8" height="1"/><rect x="818" y="112" width="8" height="1"/><rect x="818" y="120" width="8" height="1"/><rect x="818" y="128" width="8" height="1"/><rect x="818" y="136" width="8" height="1"/><rect x="818" y="143" width="8" height="1"/><rect x="818" y="151" width="8" height="1"/><rect x="818" y="159" width="8" height="1"/><rect x="818" y="167" width="8" height="1"/><rect x="818" y="175" width="11" height="1"/><rect x="818" y="182" width="8" height="1"/><rect x="818" y="190" width="8" height="1"/><rect x="818" y="198" width="8" height="1"/><rect x="818" y="206" width="8" height="1"/><rect x="818" y="214" width="8" height="1"/><rect x="818" y="221" width="8" height="1"/><rect x="818" y="229" width="8" height="1"/><rect x="818" y="237" width="8" height="1"/><rect x="818" y="245" width="8" height="1"/><rect x="818" y="253" width="26" height="1"/><rect x="818" y="260" width="8" height="1"/><rect x="818" y="268" width="8" height="1"/><rect x="818" y="276" width="8" height="1"/><rect x="818" y="284" width="8" height="1"/><rect x="818" y="292" width="8" height="1"/><rect x="818" y="299" width="8" height="1"/><rect x="818" y="307" width="8" height="1"/><rect x="818" y="315" width="8" height="1"/><rect x="818" y="323" width="8" height="1"/><rect x="818" y="331" width="11" height="1"/><rect x="818" y="338" width="8" height="1"/><rect x="818" y="346" width="8" height="1"/><rect x="818" y="354" width="8" height="1"/><rect x="818" y="362" width="8" height="1"/><rect x="818" y="370" width="8" height="1"/><rect x="818" y="377" width="8" height="1"/><rect x="818" y="385" width="8" height="1"/><rect x="818" y="393" width="8" height="1"/><rect x="818" y="401" width="8" height="1"/><rect x="818" y="409" width="26" height="1"/><rect x="818" y="416" width="8" height="1"/><rect x="818" y="424" width="8" height="1"/><rect x="818" y="432" width="8" height="1"/><rect x="818" y="440" width="8" height="1"/><rect x="818" y="448" width="8" height="1"/><rect x="818" y="455" width="8" height="1"/><rect x="818" y="463" width="8" height="1"/><rect x="818" y="471" width="8" height="1"/><rect x="818" y="479" width="8" height="1"/><rect x="818" y="487" width="11" height="1"/><rect x="818" y="494" width="8" height="1"/><rect x="818" y="502" width="8" height="1"/><rect x="818" y="510" width="8" height="1"/><rect x="818" y="518" width="8" height="1"/><rect x="818" y="526" width="8" height="1"/><rect x="818" y="533" width="8" height="1"/><rect x="818" y="541" width="8" height="1"/><rect x="818" y="549" width="8" height="1"/><rect x="818" y="557" width="8" height="1"/><rect x="818" y="565" width="26" height="1"/><rect x="818" y="572" width="8" height="1"/><rect x="818" y="580" width="8" height="1"/><rect x="818" y="588" width="8" height="1"/><rect x="818" y="596" width="8" height="1"/><rect x="818" y="604" width="8" height="1"/><rect x="818" y="611" width="8" height="1"/><rect x="818" y="619" width="8" height="1"/><rect x="818" y="627" width="8" height="1"/><rect x="818" y="635" width="8" height="1"/><rect x="818" y="643" width="11" height="1"/><rect x="818" y="650" width="8" height="1"/><rect x="818" y="658" width="8" height="1"/><rect x="818" y="666" width="8" height="1"/><rect x="818" y="674" width="8" height="1"/><rect x="818" y="682" width="8" height="1"/><rect x="818" y="689" width="8" height="1"/><rect x="818" y="697" width="8" height="1"/><rect x="818" y="705" width="8" height="1"/><rect x="818" y="713" width="8" height="1"/><rect x="818" y="721" width="26" height="1"/><rect x="818" y="728" width="8" height="1"/><rect x="818" y="736" width="8" height="1"/><rect x="818" y="744" width="8" height="1"/><rect x="818" y="752" width="8" height="1"/><rect x="818" y="760" width="8" height="1"/><rect x="818" y="767" width="8" height="1"/><rect x="818" y="775" width="8" height="1"/>
</g>
<polyline points="823.5,9.5 826,10 839.5,17.5" fill="none" stroke="#00009a" stroke-width="1"/>
<rect x="839" y="14" width="1" height="761" fill="#1a1a9c" shape-rendering="crispEdges"/>
<polyline points="839.5,774 825.5,781.5" fill="none" stroke="#00009a" stroke-width="1"/>
<g class="mono" style="fill:#3a3438">
<text transform="translate(848.8,97.6) rotate(90)" text-anchor="middle" xml:space="preserve">143050400</text>
<text transform="translate(848.8,253.6) rotate(90)" text-anchor="middle" xml:space="preserve">143050200</text>
<text transform="translate(848.8,409.6) rotate(90)" text-anchor="middle" xml:space="preserve">143050000</text>
<text transform="translate(848.8,565.6) rotate(90)" text-anchor="middle" xml:space="preserve">143049800</text>
<text transform="translate(848.8,721.6) rotate(90)" text-anchor="middle" xml:space="preserve">143049600 Hz</text>
</g>
<rect x="860" y="1" width="80" height="781" fill="#000"/>
<rect x="860" y="13" width="80" height="765" fill="#515151"/>
<g shape-rendering="crispEdges">
<rect x="860" y="14" width="4" height="1" fill="#000000"/><rect x="860" y="15" width="4" height="1" fill="#000000"/><rect x="860" y="16" width="5" height="1" fill="#000000"/><rect x="860" y="17" width="6" height="1" fill="#000000"/><rect x="860" y="18" width="5" height="1" fill="#000000"/><rect x="860" y="19" width="6" height="1" fill="#000000"/><rect x="860" y="20" width="4" height="1" fill="#000000"/><rect x="860" y="21" width="13" height="1" fill="#000000"/><rect x="860" y="22" width="11" height="1" fill="#000000"/><rect x="860" y="23" width="12" height="1" fill="#000000"/><rect x="860" y="24" width="15" height="1" fill="#000000"/><rect x="860" y="25" width="17" height="1" fill="#000000"/><rect x="860" y="26" width="18" height="1" fill="#000000"/><rect x="860" y="31" width="11" height="1" fill="#000000"/><rect x="860" y="32" width="11" height="1" fill="#000000"/><rect x="860" y="33" width="12" height="1" fill="#000000"/><rect x="860" y="34" width="7" height="1" fill="#000000"/><rect x="860" y="35" width="7" height="1" fill="#000000"/><rect x="860" y="36" width="22" height="1" fill="#030341"/><rect x="860" y="37" width="22" height="1" fill="#02023d"/><rect x="860" y="38" width="23" height="1" fill="#030344"/><rect x="860" y="39" width="14" height="1" fill="#000000"/><rect x="860" y="40" width="15" height="1" fill="#000000"/><rect x="860" y="41" width="14" height="1" fill="#000000"/><rect x="860" y="42" width="13" height="1" fill="#000000"/><rect x="860" y="43" width="14" height="1" fill="#000000"/><rect x="860" y="44" width="20" height="1" fill="#000004"/><rect x="860" y="45" width="20" height="1" fill="#000000"/><rect x="860" y="46" width="14" height="1" fill="#000000"/><rect x="860" y="47" width="15" height="1" fill="#000000"/><rect x="860" y="48" width="15" height="1" fill="#000000"/><rect x="860" y="51" width="22" height="1" fill="#02023a"/><rect x="860" y="52" width="23" height="1" fill="#030349"/><rect x="860" y="53" width="22" height="1" fill="#030342"/><rect x="860" y="54" width="22" height="1" fill="#030340"/><rect x="860" y="55" width="22" height="1" fill="#02023c"/><rect x="860" y="56" width="13" height="1" fill="#000000"/><rect x="860" y="57" width="13" height="1" fill="#000000"/><rect x="860" y="58" width="16" height="1" fill="#000000"/><rect x="860" y="59" width="14" height="1" fill="#000000"/><rect x="860" y="60" width="14" height="1" fill="#000000"/><rect x="860" y="61" width="14" height="1" fill="#000000"/><rect x="860" y="62" width="14" height="1" fill="#000000"/><rect x="860" y="63" width="3" height="1" fill="#000000"/><rect x="860" y="64" width="3" height="1" fill="#000000"/><rect x="860" y="65" width="7" height="1" fill="#000000"/><rect x="860" y="66" width="7" height="1" fill="#000000"/><rect x="860" y="67" width="10" height="1" fill="#000000"/><rect x="860" y="68" width="10" height="1" fill="#000000"/><rect x="860" y="69" width="8" height="1" fill="#000000"/><rect x="860" y="70" width="8" height="1" fill="#000000"/><rect x="860" y="71" width="3" height="1" fill="#000000"/><rect x="860" y="72" width="3" height="1" fill="#000000"/><rect x="860" y="73" width="6" height="1" fill="#000000"/><rect x="860" y="74" width="6" height="1" fill="#000000"/><rect x="860" y="75" width="12" height="1" fill="#000000"/><rect x="860" y="76" width="12" height="1" fill="#000000"/><rect x="860" y="77" width="14" height="1" fill="#000000"/><rect x="860" y="78" width="14" height="1" fill="#000000"/><rect x="860" y="79" width="1" height="1" fill="#000000"/><rect x="860" y="80" width="1" height="1" fill="#000000"/><rect x="860" y="85" width="10" height="1" fill="#000000"/><rect x="860" y="86" width="10" height="1" fill="#000000"/><rect x="860" y="87" width="14" height="1" fill="#000000"/><rect x="860" y="88" width="14" height="1" fill="#000000"/><rect x="860" y="89" width="16" height="1" fill="#000000"/><rect x="860" y="90" width="16" height="1" fill="#000000"/><rect x="860" y="91" width="13" height="1" fill="#000000"/><rect x="860" y="94" width="6" height="1" fill="#000000"/><rect x="860" y="95" width="6" height="1" fill="#000000"/><rect x="860" y="96" width="16" height="1" fill="#000000"/><rect x="860" y="97" width="15" height="1" fill="#000000"/><rect x="860" y="98" width="14" height="1" fill="#000000"/><rect x="860" y="99" width="5" height="1" fill="#000000"/><rect x="860" y="100" width="5" height="1" fill="#000000"/><rect x="860" y="101" width="8" height="1" fill="#000000"/><rect x="860" y="102" width="12" height="1" fill="#000000"/><rect x="860" y="103" width="12" height="1" fill="#000000"/><rect x="860" y="104" width="12" height="1" fill="#000000"/><rect x="860" y="105" width="9" height="1" fill="#000000"/><rect x="860" y="106" width="9" height="1" fill="#000000"/><rect x="860" y="107" width="9" height="1" fill="#000000"/><rect x="860" y="110" width="7" height="1" fill="#000000"/><rect x="860" y="111" width="15" height="1" fill="#000000"/><rect x="860" y="112" width="14" height="1" fill="#000000"/><rect x="860" y="113" width="15" height="1" fill="#000000"/><rect x="860" y="114" width="12" height="1" fill="#000000"/><rect x="860" y="115" width="12" height="1" fill="#000000"/><rect x="860" y="116" width="10" height="1" fill="#000000"/><rect x="860" y="117" width="10" height="1" fill="#000000"/><rect x="860" y="118" width="14" height="1" fill="#000000"/><rect x="860" y="119" width="17" height="1" fill="#000000"/><rect x="860" y="120" width="14" height="2" fill="#000000"/><rect x="860" y="122" width="14" height="1" fill="#000000"/><rect x="860" y="123" width="15" height="1" fill="#000000"/><rect x="860" y="124" width="16" height="1" fill="#000000"/><rect x="860" y="125" width="14" height="1" fill="#000000"/><rect x="860" y="126" width="14" height="1" fill="#000000"/><rect x="860" y="127" width="9" height="2" fill="#000000"/><rect x="860" y="129" width="8" height="3" fill="#000000"/><rect x="860" y="132" width="13" height="2" fill="#000000"/><rect x="860" y="134" width="12" height="1" fill="#000000"/><rect x="860" y="135" width="23" height="1" fill="#030343"/><rect x="860" y="136" width="20" height="1" fill="#000000"/><rect x="860" y="137" width="21" height="1" fill="#020227"/><rect x="860" y="138" width="22" height="1" fill="#020239"/><rect x="860" y="139" width="22" height="1" fill="#030341"/><rect x="860" y="140" width="22" height="1" fill="#02023a"/><rect x="860" y="143" width="4" height="1" fill="#000000"/><rect x="860" y="148" width="10" height="1" fill="#000000"/><rect x="860" y="149" width="24" height="1" fill="#04045b"/><rect x="860" y="150" width="24" height="1" fill="#040457"/><rect x="860" y="151" width="23" height="1" fill="#030348"/><rect x="860" y="152" width="23" height="1" fill="#03034e"/><rect x="860" y="153" width="24" height="1" fill="#040458"/><rect x="860" y="154" width="12" height="1" fill="#000000"/><rect x="860" y="155" width="16" height="1" fill="#000000"/><rect x="860" y="156" width="16" height="1" fill="#000000"/><rect x="860" y="157" width="16" height="1" fill="#000000"/><rect x="860" y="158" width="15" height="1" fill="#000000"/><rect x="860" y="159" width="3" height="2" fill="#000000"/><rect x="860" y="161" width="7" height="2" fill="#000000"/><rect x="860" y="163" width="8" height="3" fill="#000000"/><rect x="860" y="174" width="6" height="1" fill="#000000"/><rect x="860" y="175" width="6" height="1" fill="#000000"/><rect x="860" y="176" width="6" height="1" fill="#000000"/><rect x="860" y="177" width="3" height="1" fill="#000000"/><rect x="860" y="178" width="3" height="1" fill="#000000"/><rect x="860" y="179" width="11" height="1" fill="#000000"/><rect x="860" y="180" width="11" height="1" fill="#000000"/><rect x="860" y="181" width="16" height="1" fill="#000000"/><rect x="860" y="182" width="17" height="1" fill="#000000"/><rect x="860" y="185" width="3" height="1" fill="#000000"/><rect x="860" y="186" width="3" height="1" fill="#000000"/><rect x="860" y="187" width="13" height="1" fill="#000000"/><rect x="860" y="188" width="13" height="1" fill="#000000"/><rect x="860" y="189" width="17" height="1" fill="#000000"/><rect x="860" y="190" width="17" height="1" fill="#000000"/><rect x="860" y="191" width="17" height="1" fill="#000000"/><rect x="860" y="192" width="19" height="1" fill="#000000"/><rect x="860" y="193" width="16" height="1" fill="#000000"/><rect x="860" y="194" width="16" height="1" fill="#000000"/><rect x="860" y="195" width="5" height="1" fill="#000000"/><rect x="860" y="196" width="5" height="1" fill="#000000"/><rect x="860" y="197" width="7" height="1" fill="#000000"/><rect x="860" y="198" width="19" height="1" fill="#000000"/><rect x="860" y="199" width="18" height="1" fill="#000000"/><rect x="860" y="200" width="14" height="1" fill="#000000"/><rect x="860" y="201" width="14" height="1" fill="#000000"/><rect x="860" y="202" width="20" height="1" fill="#00000b"/><rect x="860" y="203" width="21" height="1" fill="#02022d"/><rect x="860" y="204" width="14" height="1" fill="#000000"/><rect x="860" y="205" width="12" height="1" fill="#000000"/><rect x="860" y="206" width="14" height="1" fill="#000000"/><rect x="860" y="207" width="14" height="1" fill="#000000"/><rect x="860" y="208" width="14" height="1" fill="#000000"/><rect x="860" y="209" width="18" height="1" fill="#000000"/><rect x="860" y="210" width="20" height="1" fill="#000000"/><rect x="860" y="211" width="23" height="1" fill="#030345"/><rect x="860" y="212" width="20" height="1" fill="#000000"/><rect x="860" y="213" width="25" height="1" fill="#070662"/><rect x="860" y="214" width="23" height="1" fill="#030348"/><rect x="860" y="215" width="14" height="1" fill="#000000"/><rect x="860" y="216" width="18" height="1" fill="#000000"/><rect x="860" y="217" width="7" height="1" fill="#000000"/><rect x="860" y="218" width="8" height="1" fill="#000000"/><rect x="860" y="219" width="8" height="1" fill="#000000"/><rect x="860" y="220" width="2" height="1" fill="#000000"/><rect x="860" y="221" width="2" height="1" fill="#000000"/><rect x="860" y="222" width="20" height="1" fill="#000003"/><rect x="860" y="223" width="18" height="1" fill="#000000"/><rect x="860" y="224" width="18" height="1" fill="#000000"/><rect x="860" y="225" width="17" height="1" fill="#000000"/><rect x="860" y="226" width="22" height="1" fill="#020237"/><rect x="860" y="227" width="22" height="1" fill="#020238"/><rect x="860" y="228" width="22" height="1" fill="#020239"/><rect x="860" y="229" width="24" height="1" fill="#06055f"/><rect x="860" y="230" width="30" height="1" fill="#210d82"/><rect x="860" y="245" width="25" height="1" fill="#070663"/><rect x="860" y="246" width="27" height="1" fill="#120a79"/><rect x="860" y="247" width="27" height="1" fill="#100a78"/><rect x="860" y="248" width="29" height="1" fill="#1d0c7f"/><rect x="860" y="249" width="31" height="1" fill="#280e86"/><rect x="860" y="250" width="31" height="1" fill="#270e85"/><rect x="860" y="251" width="33" height="1" fill="#381184"/><rect x="860" y="252" width="32" height="1" fill="#331084"/><rect x="860" y="253" width="33" height="1" fill="#3f1283"/><rect x="860" y="254" width="27" height="1" fill="#0f0a76"/><rect x="860" y="255" width="28" height="1" fill="#150b7b"/><rect x="860" y="256" width="27" height="1" fill="#0f0974"/><rect x="860" y="257" width="26" height="1" fill="#0b076a"/><rect x="860" y="258" width="19" height="1" fill="#000000"/><rect x="860" y="259" width="22" height="1" fill="#02023a"/><rect x="860" y="260" width="23" height="1" fill="#030344"/><rect x="860" y="261" width="22" height="1" fill="#02023c"/><rect x="860" y="262" width="19" height="1" fill="#000000"/><rect x="860" y="263" width="20" height="1" fill="#000005"/><rect x="860" y="264" width="19" height="1" fill="#000000"/><rect x="860" y="265" width="20" height="1" fill="#000000"/><rect x="860" y="266" width="17" height="1" fill="#000000"/><rect x="860" y="267" width="16" height="1" fill="#000000"/><rect x="860" y="268" width="15" height="1" fill="#000000"/><rect x="860" y="269" width="14" height="1" fill="#000000"/><rect x="860" y="270" width="15" height="1" fill="#000000"/><rect x="860" y="271" width="15" height="1" fill="#000000"/><rect x="860" y="272" width="10" height="3" fill="#000000"/><rect x="860" y="275" width="13" height="1" fill="#000000"/><rect x="860" y="276" width="15" height="2" fill="#000000"/><rect x="860" y="278" width="14" height="1" fill="#000000"/><rect x="860" y="279" width="15" height="1" fill="#000000"/><rect x="860" y="280" width="17" height="1" fill="#000000"/><rect x="860" y="281" width="5" height="2" fill="#000000"/><rect x="860" y="283" width="8" height="3" fill="#000000"/><rect x="860" y="286" width="11" height="3" fill="#000000"/><rect x="860" y="289" width="2" height="3" fill="#000000"/><rect x="860" y="292" width="5" height="3" fill="#000000"/><rect x="860" y="295" width="3" height="2" fill="#000000"/><rect x="860" y="297" width="4" height="2" fill="#000000"/><rect x="860" y="299" width="5" height="3" fill="#000000"/><rect x="860" y="302" width="10" height="2" fill="#000000"/><rect x="860" y="304" width="15" height="1" fill="#000000"/><rect x="860" y="305" width="16" height="1" fill="#000000"/><rect x="860" y="306" width="13" height="1" fill="#000000"/><rect x="860" y="307" width="15" height="1" fill="#000000"/><rect x="860" y="308" width="9" height="2" fill="#000000"/><rect x="860" y="310" width="13" height="1" fill="#000000"/><rect x="860" y="311" width="3" height="2" fill="#000000"/><rect x="860" y="313" width="13" height="1" fill="#000000"/><rect x="860" y="314" width="14" height="2" fill="#000000"/><rect x="860" y="316" width="6" height="2" fill="#000000"/><rect x="860" y="318" width="7" height="3" fill="#000000"/><rect x="860" y="321" width="12" height="2" fill="#000000"/><rect x="860" y="323" width="15" height="1" fill="#000000"/><rect x="860" y="324" width="15" height="1" fill="#000000"/><rect x="860" y="325" width="14" height="1" fill="#000000"/><rect x="860" y="326" width="12" height="1" fill="#000000"/><rect x="860" y="327" width="15" height="1" fill="#000000"/><rect x="860" y="328" width="3" height="2" fill="#000000"/><rect x="860" y="330" width="7" height="1" fill="#000000"/><rect x="860" y="331" width="10" height="1" fill="#000000"/><rect x="860" y="332" width="14" height="1" fill="#000000"/><rect x="860" y="333" width="14" height="1" fill="#000000"/><rect x="860" y="334" width="13" height="2" fill="#000000"/><rect x="860" y="336" width="13" height="1" fill="#000000"/><rect x="860" y="337" width="12" height="1" fill="#000000"/><rect x="860" y="338" width="23" height="1" fill="#03034f"/><rect x="860" y="339" width="24" height="1" fill="#040454"/><rect x="860" y="340" width="22" height="1" fill="#02023d"/><rect x="860" y="341" width="22" height="1" fill="#020234"/><rect x="860" y="342" width="6" height="2" fill="#000000"/><rect x="860" y="344" width="1" height="2" fill="#000000"/><rect x="860" y="346" width="23" height="1" fill="#03034a"/><rect x="860" y="347" width="22" height="1" fill="#020237"/><rect x="860" y="348" width="22" height="1" fill="#02023d"/><rect x="860" y="349" width="23" height="1" fill="#030349"/><rect x="860" y="350" width="25" height="1" fill="#060560"/><rect x="860" y="351" width="13" height="1" fill="#000000"/><rect x="860" y="352" width="14" height="1" fill="#000000"/><rect x="860" y="353" width="10" height="1" fill="#000000"/><rect x="860" y="354" width="13" height="1" fill="#000000"/><rect x="860" y="355" width="15" height="1" fill="#000000"/><rect x="860" y="356" width="23" height="1" fill="#030344"/><rect x="860" y="357" width="25" height="1" fill="#080663"/><rect x="860" y="358" width="23" height="1" fill="#040451"/><rect x="860" y="359" width="24" height="1" fill="#06055e"/><rect x="860" y="360" width="24" height="1" fill="#06055f"/><rect x="860" y="361" width="17" height="1" fill="#000000"/><rect x="860" y="362" width="15" height="1" fill="#000000"/><rect x="860" y="363" width="14" height="1" fill="#000000"/><rect x="860" y="364" width="14" height="1" fill="#000000"/><rect x="860" y="365" width="13" height="2" fill="#000000"/><rect x="860" y="367" width="15" height="1" fill="#000000"/><rect x="860" y="368" width="13" height="1" fill="#000000"/><rect x="860" y="369" width="10" height="2" fill="#000000"/><rect x="860" y="371" width="11" height="2" fill="#000000"/><rect x="860" y="373" width="15" height="2" fill="#000000"/><rect x="860" y="375" width="15" height="1" fill="#000000"/><rect x="860" y="376" width="13" height="2" fill="#000000"/><rect x="860" y="378" width="15" height="1" fill="#000000"/><rect x="860" y="379" width="14" height="1" fill="#000000"/><rect x="860" y="380" width="14" height="1" fill="#000000"/><rect x="860" y="381" width="11" height="2" fill="#000000"/><rect x="860" y="383" width="10" height="2" fill="#000000"/><rect x="860" y="385" width="13" height="2" fill="#000000"/><rect x="860" y="387" width="13" height="1" fill="#000000"/><rect x="860" y="388" width="13" height="1" fill="#000000"/><rect x="860" y="389" width="13" height="1" fill="#000000"/><rect x="860" y="390" width="14" height="1" fill="#000000"/><rect x="860" y="391" width="14" height="2" fill="#000000"/><rect x="860" y="393" width="8" height="2" fill="#000000"/><rect x="860" y="395" width="15" height="2" fill="#000000"/><rect x="860" y="397" width="2" height="2" fill="#000000"/><rect x="860" y="399" width="23" height="1" fill="#030348"/><rect x="860" y="400" width="21" height="1" fill="#01011e"/><rect x="860" y="401" width="15" height="2" fill="#000000"/><rect x="860" y="403" width="12" height="2" fill="#000000"/><rect x="860" y="405" width="15" height="1" fill="#000000"/><rect x="860" y="406" width="15" height="1" fill="#000000"/><rect x="860" y="407" width="16" height="1" fill="#000000"/><rect x="860" y="409" width="2" height="2" fill="#000000"/><rect x="860" y="411" width="8" height="2" fill="#000000"/><rect x="860" y="415" width="8" height="2" fill="#000000"/><rect x="860" y="417" width="15" height="2" fill="#000000"/><rect x="860" y="421" width="7" height="2" fill="#000000"/><rect x="860" y="423" width="7" height="1" fill="#000000"/><rect x="860" y="424" width="9" height="2" fill="#000000"/><rect x="860" y="426" width="14" height="2" fill="#000000"/><rect x="860" y="429" width="13" height="2" fill="#000000"/><rect x="860" y="431" width="14" height="1" fill="#000000"/><rect x="860" y="432" width="16" height="1" fill="#000000"/><rect x="860" y="433" width="17" height="1" fill="#000000"/><rect x="860" y="434" width="14" height="1" fill="#000000"/><rect x="860" y="435" width="11" height="2" fill="#000000"/><rect x="860" y="437" width="23" height="1" fill="#03034b"/><rect x="860" y="438" width="23" height="1" fill="#030347"/><rect x="860" y="439" width="15" height="2" fill="#000000"/><rect x="860" y="441" width="13" height="1" fill="#000000"/><rect x="860" y="442" width="15" height="1" fill="#000000"/><rect x="860" y="443" width="14" height="1" fill="#000000"/><rect x="860" y="444" width="13" height="1" fill="#000000"/><rect x="860" y="445" width="17" height="1" fill="#000000"/><rect x="860" y="446" width="14" height="1" fill="#000000"/><rect x="860" y="447" width="15" height="1" fill="#000000"/><rect x="860" y="448" width="15" height="1" fill="#000000"/><rect x="860" y="449" width="17" height="1" fill="#000000"/><rect x="860" y="450" width="11" height="2" fill="#000000"/><rect x="860" y="452" width="17" height="1" fill="#000000"/><rect x="860" y="453" width="16" height="1" fill="#000000"/><rect x="860" y="454" width="14" height="1" fill="#000000"/><rect x="860" y="455" width="3" height="2" fill="#000000"/><rect x="860" y="457" width="3" height="1" fill="#000000"/><rect x="860" y="458" width="9" height="2" fill="#000000"/><rect x="860" y="460" width="15" height="1" fill="#000000"/><rect x="860" y="461" width="13" height="1" fill="#000000"/><rect x="860" y="462" width="15" height="1" fill="#000000"/><rect x="860" y="463" width="16" height="1" fill="#000000"/><rect x="860" y="464" width="14" height="1" fill="#000000"/><rect x="860" y="465" width="5" height="2" fill="#000000"/><rect x="860" y="470" width="3" height="2" fill="#000000"/><rect x="860" y="475" width="9" height="2" fill="#000000"/><rect x="860" y="477" width="15" height="1" fill="#000000"/><rect x="860" y="478" width="13" height="2" fill="#000000"/><rect x="860" y="480" width="1" height="2" fill="#000000"/><rect x="860" y="482" width="13" height="1" fill="#000000"/><rect x="860" y="483" width="7" height="2" fill="#000000"/><rect x="860" y="487" width="9" height="2" fill="#000000"/><rect x="860" y="489" width="9" height="1" fill="#000000"/><rect x="860" y="490" width="8" height="2" fill="#000000"/><rect x="860" y="492" width="6" height="1" fill="#000000"/><rect x="860" y="493" width="14" height="2" fill="#000000"/><rect x="860" y="495" width="7" height="2" fill="#000000"/><rect x="860" y="497" width="13" height="1" fill="#000000"/><rect x="860" y="498" width="15" height="1" fill="#000000"/><rect x="860" y="499" width="17" height="1" fill="#000000"/><rect x="860" y="500" width="17" height="1" fill="#000000"/><rect x="860" y="501" width="16" height="1" fill="#000000"/><rect x="860" y="502" width="12" height="2" fill="#000000"/><rect x="860" y="504" width="12" height="1" fill="#000000"/><rect x="860" y="505" width="15" height="1" fill="#000000"/><rect x="860" y="506" width="16" height="1" fill="#000000"/><rect x="860" y="507" width="16" height="1" fill="#000000"/><rect x="860" y="508" width="17" height="1" fill="#000000"/><rect x="860" y="509" width="14" height="1" fill="#000000"/><rect x="860" y="510" width="15" height="1" fill="#000000"/><rect x="860" y="511" width="17" height="1" fill="#000000"/><rect x="860" y="512" width="14" height="1" fill="#000000"/><rect x="860" y="513" width="15" height="1" fill="#000000"/><rect x="860" y="514" width="15" height="1" fill="#000000"/><rect x="860" y="515" width="15" height="1" fill="#000000"/><rect x="860" y="516" width="14" height="1" fill="#000000"/><rect x="860" y="517" width="9" height="2" fill="#000000"/><rect x="860" y="519" width="4" height="2" fill="#000000"/><rect x="860" y="521" width="5" height="1" fill="#000000"/><rect x="860" y="522" width="5" height="1" fill="#000000"/><rect x="860" y="523" width="14" height="1" fill="#000000"/><rect x="860" y="524" width="10" height="1" fill="#000000"/><rect x="860" y="525" width="10" height="1" fill="#000000"/><rect x="860" y="526" width="16" height="1" fill="#000000"/><rect x="860" y="527" width="16" height="1" fill="#000000"/><rect x="860" y="528" width="10" height="1" fill="#000000"/><rect x="860" y="529" width="7" height="1" fill="#000000"/><rect x="860" y="530" width="7" height="1" fill="#000000"/><rect x="860" y="531" width="6" height="1" fill="#000000"/><rect x="860" y="532" width="4" height="1" fill="#000000"/><rect x="860" y="533" width="4" height="1" fill="#000000"/><rect x="860" y="534" width="10" height="1" fill="#000000"/><rect x="860" y="535" width="10" height="1" fill="#000000"/><rect x="860" y="536" width="10" height="1" fill="#000000"/><rect x="860" y="537" width="14" height="1" fill="#000000"/><rect x="860" y="538" width="14" height="1" fill="#000000"/><rect x="860" y="539" width="15" height="1" fill="#000000"/><rect x="860" y="540" width="14" height="1" fill="#000000"/><rect x="860" y="541" width="15" height="1" fill="#000000"/><rect x="860" y="542" width="15" height="1" fill="#000000"/><rect x="860" y="543" width="11" height="1" fill="#000000"/><rect x="860" y="544" width="11" height="1" fill="#000000"/><rect x="860" y="545" width="15" height="1" fill="#000000"/><rect x="860" y="546" width="16" height="1" fill="#000000"/><rect x="860" y="547" width="16" height="1" fill="#000000"/><rect x="860" y="548" width="14" height="1" fill="#000000"/><rect x="860" y="549" width="14" height="1" fill="#000000"/><rect x="860" y="550" width="17" height="1" fill="#000000"/><rect x="860" y="551" width="15" height="1" fill="#000000"/><rect x="860" y="552" width="15" height="1" fill="#000000"/><rect x="860" y="553" width="4" height="1" fill="#000000"/><rect x="860" y="554" width="4" height="1" fill="#000000"/><rect x="860" y="555" width="11" height="1" fill="#000000"/><rect x="860" y="556" width="11" height="1" fill="#000000"/><rect x="860" y="557" width="10" height="1" fill="#000000"/><rect x="860" y="558" width="4" height="1" fill="#000000"/><rect x="860" y="559" width="4" height="1" fill="#000000"/><rect x="860" y="560" width="8" height="1" fill="#000000"/><rect x="860" y="561" width="8" height="1" fill="#000000"/><rect x="860" y="562" width="8" height="1" fill="#000000"/><rect x="860" y="563" width="14" height="1" fill="#000000"/><rect x="860" y="564" width="13" height="1" fill="#000000"/><rect x="860" y="565" width="13" height="1" fill="#000000"/><rect x="860" y="566" width="13" height="1" fill="#000000"/><rect x="860" y="567" width="21" height="1" fill="#010120"/><rect x="860" y="568" width="22" height="1" fill="#020236"/><rect x="860" y="569" width="13" height="1" fill="#000000"/><rect x="860" y="570" width="13" height="1" fill="#000000"/><rect x="860" y="571" width="9" height="1" fill="#000000"/><rect x="860" y="572" width="9" height="1" fill="#000000"/><rect x="860" y="573" width="3" height="1" fill="#000000"/><rect x="860" y="574" width="3" height="1" fill="#000000"/><rect x="860" y="577" width="2" height="1" fill="#000000"/><rect x="860" y="578" width="2" height="1" fill="#000000"/><rect x="860" y="579" width="9" height="1" fill="#000000"/><rect x="860" y="580" width="9" height="1" fill="#000000"/><rect x="860" y="581" width="11" height="1" fill="#000000"/><rect x="860" y="582" width="11" height="1" fill="#000000"/><rect x="860" y="583" width="11" height="1" fill="#000000"/><rect x="860" y="584" width="13" height="1" fill="#000000"/><rect x="860" y="585" width="14" height="1" fill="#000000"/><rect x="860" y="586" width="13" height="1" fill="#000000"/><rect x="860" y="587" width="13" height="1" fill="#000000"/><rect x="860" y="588" width="13" height="1" fill="#000000"/><rect x="860" y="589" width="8" height="1" fill="#000000"/><rect x="860" y="590" width="8" height="1" fill="#000000"/><rect x="860" y="591" width="5" height="1" fill="#000000"/><rect x="860" y="592" width="11" height="1" fill="#000000"/><rect x="860" y="593" width="11" height="1" fill="#000000"/><rect x="860" y="594" width="11" height="1" fill="#000000"/><rect x="860" y="595" width="11" height="1" fill="#000000"/><rect x="860" y="596" width="10" height="1" fill="#000000"/><rect x="860" y="597" width="13" height="1" fill="#000000"/><rect x="860" y="598" width="13" height="1" fill="#000000"/><rect x="860" y="599" width="13" height="1" fill="#000000"/><rect x="860" y="600" width="16" height="1" fill="#000000"/><rect x="860" y="601" width="8" height="1" fill="#000000"/><rect x="860" y="602" width="5" height="2" fill="#000000"/><rect x="860" y="604" width="10" height="1" fill="#000000"/><rect x="860" y="605" width="6" height="1" fill="#000000"/><rect x="860" y="606" width="5" height="1" fill="#000000"/><rect x="860" y="607" width="13" height="3" fill="#000000"/><rect x="860" y="610" width="12" height="1" fill="#000000"/><rect x="860" y="611" width="14" height="1" fill="#000000"/><rect x="860" y="612" width="13" height="1" fill="#000000"/><rect x="860" y="613" width="10" height="1" fill="#000000"/><rect x="860" y="614" width="14" height="2" fill="#000000"/><rect x="860" y="616" width="20" height="1" fill="#010111"/><rect x="860" y="617" width="20" height="1" fill="#000000"/><rect x="860" y="618" width="20" height="1" fill="#000000"/><rect x="860" y="619" width="19" height="1" fill="#000000"/><rect x="860" y="620" width="21" height="1" fill="#010120"/><rect x="860" y="621" width="20" height="1" fill="#000009"/><rect x="860" y="622" width="11" height="2" fill="#000000"/><rect x="860" y="624" width="5" height="2" fill="#000000"/><rect x="860" y="626" width="9" height="3" fill="#000000"/><rect x="860" y="629" width="14" height="1" fill="#000000"/><rect x="860" y="630" width="15" height="2" fill="#000000"/><rect x="860" y="632" width="10" height="3" fill="#000000"/><rect x="860" y="635" width="9" height="1" fill="#000000"/><rect x="860" y="636" width="23" height="1" fill="#030350"/><rect x="860" y="637" width="23" height="1" fill="#030348"/><rect x="860" y="638" width="21" height="1" fill="#010120"/><rect x="860" y="639" width="22" height="1" fill="#020237"/><rect x="860" y="640" width="11" height="2" fill="#000000"/><rect x="860" y="642" width="12" height="2" fill="#000000"/><rect x="860" y="644" width="6" height="1" fill="#000000"/><rect x="860" y="645" width="14" height="1" fill="#000000"/><rect x="860" y="646" width="9" height="3" fill="#000000"/><rect x="860" y="649" width="7" height="2" fill="#000000"/><rect x="860" y="651" width="4" height="3" fill="#000000"/><rect x="860" y="654" width="8" height="2" fill="#000000"/><rect x="860" y="656" width="11" height="2" fill="#000000"/><rect x="860" y="660" width="20" height="1" fill="#000003"/><rect x="860" y="661" width="18" height="1" fill="#000000"/><rect x="860" y="662" width="20" height="1" fill="#00000c"/><rect x="860" y="663" width="9" height="2" fill="#000000"/><rect x="860" y="665" width="10" height="2" fill="#000000"/><rect x="860" y="669" width="8" height="3" fill="#000000"/><rect x="860" y="672" width="14" height="1" fill="#000000"/><rect x="860" y="673" width="14" height="1" fill="#000000"/><rect x="860" y="674" width="13" height="2" fill="#000000"/><rect x="860" y="676" width="14" height="1" fill="#000000"/><rect x="860" y="677" width="13" height="1" fill="#000000"/><rect x="860" y="678" width="6" height="1" fill="#000000"/><rect x="860" y="681" width="6" height="3" fill="#000000"/><rect x="860" y="684" width="13" height="1" fill="#000000"/><rect x="860" y="685" width="13" height="1" fill="#000000"/><rect x="860" y="686" width="15" height="1" fill="#000000"/><rect x="860" y="687" width="14" height="2" fill="#000000"/><rect x="860" y="689" width="8" height="2" fill="#000000"/><rect x="860" y="691" width="15" height="1" fill="#000000"/><rect x="860" y="692" width="14" height="1" fill="#000000"/><rect x="860" y="693" width="4" height="3" fill="#000000"/><rect x="860" y="696" width="11" height="2" fill="#000000"/><rect x="860" y="698" width="13" height="1" fill="#000000"/><rect x="860" y="699" width="10" height="2" fill="#000000"/><rect x="860" y="701" width="10" height="2" fill="#000000"/><rect x="860" y="703" width="9" height="1" fill="#000000"/><rect x="860" y="704" width="12" height="2" fill="#000000"/><rect x="860" y="706" width="14" height="1" fill="#000000"/><rect x="860" y="707" width="14" height="1" fill="#000000"/><rect x="860" y="708" width="3" height="2" fill="#000000"/><rect x="860" y="710" width="3" height="1" fill="#000000"/><rect x="860" y="713" width="11" height="2" fill="#000000"/><rect x="860" y="715" width="11" height="1" fill="#000000"/><rect x="860" y="716" width="11" height="2" fill="#000000"/><rect x="860" y="718" width="12" height="1" fill="#000000"/><rect x="860" y="719" width="12" height="1" fill="#000000"/><rect x="860" y="720" width="14" height="1" fill="#000000"/><rect x="860" y="721" width="14" height="1" fill="#000000"/><rect x="860" y="725" width="22" height="1" fill="#020238"/><rect x="860" y="726" width="20" height="1" fill="#010110"/><rect x="860" y="727" width="22" height="1" fill="#02023c"/><rect x="860" y="728" width="21" height="1" fill="#020233"/><rect x="860" y="729" width="19" height="1" fill="#000000"/><rect x="860" y="730" width="15" height="1" fill="#000000"/><rect x="860" y="731" width="11" height="1" fill="#000000"/><rect x="860" y="732" width="11" height="2" fill="#000000"/><rect x="860" y="734" width="12" height="2" fill="#000000"/><rect x="860" y="736" width="13" height="2" fill="#000000"/><rect x="860" y="738" width="14" height="2" fill="#000000"/><rect x="860" y="740" width="14" height="2" fill="#000000"/><rect x="860" y="742" width="14" height="1" fill="#000000"/><rect x="860" y="743" width="7" height="1" fill="#000000"/><rect x="860" y="744" width="7" height="1" fill="#000000"/><rect x="860" y="747" width="10" height="2" fill="#000000"/><rect x="860" y="749" width="10" height="1" fill="#000000"/><rect x="860" y="750" width="7" height="1" fill="#000000"/><rect x="860" y="751" width="7" height="1" fill="#000000"/><rect x="860" y="752" width="11" height="1" fill="#000000"/><rect x="860" y="753" width="11" height="1" fill="#000000"/><rect x="860" y="754" width="11" height="1" fill="#000000"/><rect x="860" y="755" width="7" height="1" fill="#000000"/><rect x="860" y="756" width="7" height="1" fill="#000000"/><rect x="860" y="757" width="12" height="1" fill="#000000"/><rect x="860" y="758" width="11" height="1" fill="#000000"/><rect x="860" y="759" width="8" height="1" fill="#000000"/><rect x="860" y="760" width="8" height="1" fill="#000000"/><rect x="860" y="761" width="11" height="1" fill="#000000"/><rect x="860" y="762" width="11" height="1" fill="#000000"/><rect x="860" y="763" width="10" height="1" fill="#000000"/><rect x="860" y="764" width="9" height="1" fill="#000000"/><rect x="860" y="765" width="2" height="1" fill="#000000"/><rect x="860" y="768" width="17" height="1" fill="#000000"/><rect x="860" y="769" width="17" height="1" fill="#000000"/><rect x="860" y="770" width="14" height="1" fill="#000000"/><rect x="860" y="771" width="15" height="1" fill="#000000"/><rect x="860" y="772" width="15" height="1" fill="#000000"/><rect x="860" y="773" width="1" height="1" fill="#000000"/><rect x="860" y="231" width="24" height="1" fill="#34107e"/><rect x="860" y="232" width="32" height="1" fill="#6a1a80"/><rect x="860" y="233" width="42" height="1" fill="#8e2670"/><rect x="860" y="234" width="46" height="1" fill="#a83462"/><rect x="860" y="235" width="46" height="1" fill="#b03a5c"/><rect x="860" y="236" width="46" height="1" fill="#b03a5a"/><rect x="860" y="237" width="47" height="1" fill="#b43c58"/><rect x="860" y="238" width="46" height="1" fill="#b03a5a"/><rect x="860" y="239" width="46" height="1" fill="#b84254"/><rect x="860" y="240" width="46" height="1" fill="#c85044"/><rect x="860" y="241" width="47" height="1" fill="#d86638"/><rect x="860" y="242" width="49" height="1" fill="#e47a30"/><rect x="860" y="243" width="50" height="1" fill="#e88230"/><rect x="860" y="244" width="40" height="1" fill="#b8503c"/>
<rect x="860" y="19" width="80" height="1" fill="#808080"/><rect x="860" y="97" width="80" height="1" fill="#808080"/><rect x="860" y="175" width="80" height="1" fill="#808080"/><rect x="860" y="253" width="80" height="1" fill="#808080"/><rect x="860" y="331" width="80" height="1" fill="#808080"/><rect x="860" y="409" width="80" height="1" fill="#808080"/><rect x="860" y="487" width="80" height="1" fill="#808080"/><rect x="860" y="565" width="80" height="1" fill="#808080"/><rect x="860" y="643" width="80" height="1" fill="#808080"/><rect x="860" y="721" width="80" height="1" fill="#808080"/>
</g>
<clipPath id="pclip"><rect x="860" y="1" width="80" height="781"/></clipPath>
<g clip-path="url(#pclip)">
<rect x="860" y="1" width="1.4" height="19" fill="#d01818"/>
<polyline points="861.2,12.0 867.1,14.3 874.3,16.5 879.6,18.7 882.5,20.5 882.6,22.3 884.4,25.0 882.2,27.1 886.5,29.7 889.5,32.3 885.2,34.6 889.6,36.7 885.8,38.7 887.1,41.0 889.7,43.6 881.9,45.9 888.6,48.2 886.1,50.3 884.2,52.4 889.4,54.5 884.3,57.0 888.4,58.8 888.9,60.6 885.8,62.7 891.6,65.2 886.4,67.4 887.7,69.2 885.6,71.1 890.8,73.1 890.0,75.0 886.4,77.5 892.5,79.3 888.3,81.4 889.4,83.7 886.8,86.0 885.1,88.4 891.6,91.0 893.6,93.5 891.5,95.3 884.8,97.1 885.9,99.5 890.7,101.4 884.7,103.7 885.6,105.5 889.4,108.0 883.9,110.1 889.5,112.1 883.3,114.6 885.3,116.9 890.1,118.8 882.7,121.0 887.9,123.6 887.6,125.4 884.9,128.0 889.9,130.3 887.4,132.3 890.4,134.9 891.9,137.0 887.2,138.9 890.7,140.7 888.6,143.1 893.4,145.4 890.5,147.9 891.8,150.1 887.0,152.2 890.4,154.0 893.5,156.0 888.8,158.6 892.7,161.1 889.9,163.4 894.6,165.7 894.1,168.0 896.4,170.5 895.5,172.8 893.2,174.7 895.2,176.9 898.1,179.4 898.0,181.3 897.3,183.6 898.7,186.0 896.7,188.5 897.9,190.9 901.3,193.4 901.8,196.1 901.9,198.1 904.8,200.2 902.3,202.5 905.6,204.5 903.3,206.6 908.0,208.8 905.9,210.9 907.8,213.3 907.3,215.6 907.1,217.9 909.2,219.7 911.3,221.8 915.1,223.7 916.9,226.0 920.1,228.3 920.8,230.1 924.3,232.0 925.1,233.8 923.0,236.0 921.9,238.6 924.8,240.9 927.8,243.0 936.0,245.1 939.6,246.5" fill="none" stroke="#28e428" stroke-width="1.1" stroke-opacity="1" stroke-linejoin="round"/>
<polyline points="939.6,261.0 929.7,263.1 921.7,264.9 912.8,267.2 908.9,269.0 908.0,270.8 904.4,273.2 902.9,275.5 898.4,277.9 896.3,280.4 894.9,282.9 894.2,285.1 892.7,287.0 891.1,288.8 890.0,291.1 886.8,293.1 888.5,295.0 889.8,296.9 886.8,298.8 889.3,301.0 889.2,303.2 887.1,305.6 890.2,307.9 884.4,310.5 883.8,312.7 888.0,314.5 882.7,316.6 883.5,318.9 889.8,320.8 886.2,322.7 885.6,325.2 886.9,327.6 884.5,329.4 886.6,331.7 887.8,334.1 883.0,336.2 884.9,338.1 883.5,340.3 886.3,342.4 882.5,344.4 885.3,347.0 889.7,349.1 883.5,351.4 884.9,353.8 889.9,356.1 888.3,358.5 882.9,360.5 888.2,362.3 883.7,364.8 888.0,367.2 889.7,369.2 884.5,371.0 884.4,373.4 886.1,375.7 884.3,377.5 890.9,379.9 888.2,381.8 889.9,384.0 884.6,386.6 888.6,388.6 886.1,390.5 888.8,392.8 882.7,394.7 889.5,397.3 891.0,399.3 885.4,401.6 888.5,403.7 884.9,405.8 883.5,408.2 883.2,410.0 888.4,411.9 883.1,413.7 883.2,416.1 883.9,418.6 890.3,421.0 885.1,423.0 884.0,424.8 884.3,426.7 882.4,429.2 890.3,431.0 886.7,433.5 889.4,436.0 884.6,438.1 887.6,440.0 886.4,442.3 884.4,444.9 889.6,446.7 884.7,449.1 886.0,450.9 884.8,453.3 886.9,455.9 887.5,458.4 888.5,460.9 889.5,462.8 889.9,464.9 887.2,467.3 889.0,469.7 884.7,471.6 886.5,473.4 887.1,475.9 888.5,478.2 883.7,480.7 889.1,482.9 885.8,485.3 886.1,487.3 884.8,489.4 886.0,491.6 891.1,493.7 883.8,495.5 886.9,497.7 888.4,499.7 885.8,502.3 887.9,504.9 887.0,507.1 886.1,509.0 885.7,511.5 883.3,513.3 888.1,515.1 884.9,516.9 885.4,519.0 888.1,520.9 883.1,523.0 890.8,525.3 886.0,527.2 884.3,529.7 890.2,531.8 884.9,534.2 883.8,536.5 882.3,538.6 887.8,540.4 890.0,542.9 886.3,545.2 887.5,547.2 882.6,549.5 884.0,551.8 883.9,553.7 884.1,555.9 886.0,558.3 884.8,560.6 882.8,563.0 884.0,565.6 889.4,567.7 884.1,569.8 885.8,571.9 885.5,574.4 885.1,576.5 882.5,578.9 881.5,580.8 887.2,583.3 883.4,585.7 888.7,588.2 884.2,590.6 884.5,592.4 887.3,594.4 887.2,596.6 882.9,599.2 888.9,601.8 880.7,604.1 886.9,606.5 884.9,608.6 888.7,611.1 886.2,613.6 882.3,616.1 887.4,618.1 882.9,619.8 889.2,622.1 888.2,624.2 882.5,626.5 888.8,628.6 888.2,631.1 889.4,633.6 882.2,635.6 886.7,638.1 888.9,640.4 887.0,642.3 885.4,644.3 883.6,646.3 884.5,648.8 885.8,651.3 884.7,653.7 882.2,655.6 882.8,657.6 884.8,659.8 887.9,662.4 884.2,664.2 879.3,666.2 881.8,668.5 882.2,670.3 885.5,672.9 881.2,674.7 886.1,677.0 885.5,679.3 883.5,681.9 883.8,683.9 887.3,686.3 882.0,688.8 887.7,690.9 881.9,693.4 886.6,695.2 885.5,697.6 882.5,699.5 881.2,701.3 883.5,703.8 885.2,706.4 880.1,708.5 881.1,711.0 880.8,713.2 886.0,715.7 884.8,717.5 885.7,719.6 880.9,721.7 887.4,723.5 882.7,725.6 884.3,727.7 880.3,729.5 885.3,731.8 881.1,733.9 887.5,736.2 881.7,738.9 885.2,741.4 881.6,743.9 882.8,746.1 886.4,748.4 881.6,750.8 882.3,752.6 885.0,755.2 882.4,757.2 885.1,759.5 883.6,761.9 882.8,763.7 881.6,765.5 879.2,767.7 877.6,769.8 875.2,772.3 871.8,774.7 870.3,776.9 869.0,778.0" fill="none" stroke="#28e428" stroke-width="1.1" stroke-opacity="1" stroke-linejoin="round"/>
<polyline points="860.9,13.0 861.0,14.6 860.6,16.6 861.0,18.6 861.6,20.1 862.3,21.6 863.8,23.7 864.6,25.3 865.4,27.0 867.5,29.1 867.7,30.6 869.1,32.4 869.2,34.2 870.9,35.9 870.3,37.4 871.6,39.2 870.5,41.0 873.0,43.1 873.1,44.9 871.6,47.0 873.0,48.9 872.5,50.7 872.1,52.6 872.9,54.4 873.2,56.5 871.1,58.5 872.1,60.3 872.4,61.9 873.1,63.7 872.5,65.2 871.7,66.9 871.6,68.7 873.0,70.8 871.3,72.8 872.0,74.7 870.9,76.7 872.2,78.2 870.7,80.0 872.0,81.9 872.1,83.5 870.8,85.4 873.1,87.0 872.2,89.0 870.3,90.6 870.6,92.3 870.7,93.8 872.6,96.0 869.8,97.6 872.1,99.5 869.8,101.5 871.1,103.2 871.7,104.7 870.5,106.3 870.0,108.4 872.6,110.2 870.3,111.9 871.6,113.8 871.7,115.4 872.3,117.3 870.0,118.9 872.4,121.0 872.4,123.1 872.4,124.5 871.2,126.2 873.0,127.8 871.8,129.7 872.5,131.3 871.5,133.1 872.0,134.6 873.1,136.4 871.4,138.1 870.5,139.9 871.8,141.5 870.1,143.1 872.1,144.6 871.1,146.5 872.5,148.3 870.7,149.8 873.4,151.4 872.8,152.9 872.0,154.9 872.3,156.5 871.5,158.3 873.0,160.2 870.8,162.0 872.5,163.5 872.6,165.4 871.1,167.5 873.0,169.4 871.5,171.4 870.6,173.4 871.9,175.1 871.8,177.2 870.7,179.4 872.6,181.5 871.5,183.2 872.3,184.8 871.6,187.0 873.3,188.5 871.9,190.2 872.2,192.1 872.2,193.6 871.9,195.2 873.4,197.2 873.2,198.9 872.3,200.4 873.6,202.3 874.2,204.0 874.0,205.6 873.7,207.6 872.0,209.3 873.7,210.8 872.7,212.3 871.8,214.0 873.3,215.5 873.2,217.0 874.5,218.6 874.8,220.2 874.7,222.2 874.2,224.2 875.5,225.9 875.7,227.6 877.9,229.7 879.1,231.4 881.2,232.9 881.6,234.4 883.8,236.3 884.4,237.8 885.9,239.9 886.4,241.8 887.6,243.7 890.1,245.2 892.7,247.0 897.4,249.2 902.9,251.1 909.8,252.8 912.5,254.6 911.9,256.7 905.8,258.6 905.0,260.1 888.8,262.0 880.1,264.0 878.2,265.4 874.8,267.4 873.3,269.5 872.2,271.0 871.1,272.9 872.4,274.8 872.7,276.7 870.6,278.6 872.1,280.7 871.0,282.2 870.3,283.9 870.7,286.0 870.2,287.7 870.7,289.4 872.6,291.4 871.4,293.0 873.5,294.6 872.1,296.5 870.9,298.5 871.7,300.3 870.8,302.4 873.3,304.4 870.8,306.1 873.3,307.8 872.1,309.7 871.3,311.8 872.7,313.4 871.9,315.4 872.6,317.3 870.7,319.3 870.8,320.8 872.8,322.8 871.9,324.6 871.9,326.3 871.0,328.3 871.5,329.7 871.7,331.4 873.4,332.8 871.4,334.5 873.5,336.5 871.2,338.3 872.5,340.1 870.3,342.0 871.6,343.5 872.2,345.0 871.3,346.8 873.2,348.5 871.9,350.0 873.3,352.1 871.6,354.0 871.6,355.7 872.8,357.2 870.5,359.3 873.3,361.1 872.4,363.2 870.3,364.6 871.8,366.2 872.5,368.0 869.8,369.7 869.6,371.7 870.3,373.2 869.6,374.9 870.1,376.7 870.3,378.4 871.1,379.9 871.2,381.6 872.0,383.3 873.1,384.8 871.3,386.4 872.1,388.3 872.3,390.3 870.8,392.4 871.7,394.3 871.4,395.8 872.2,397.9 871.6,399.8 870.6,401.6 873.2,403.6 870.6,405.7 872.1,407.7 870.4,409.1 872.7,411.2 871.4,412.6 872.7,414.3 872.9,416.1 871.6,417.8 872.3,419.5 871.5,421.6 871.2,423.6 871.7,425.7 873.8,427.4 871.0,429.4 872.5,431.0 871.4,432.5 872.3,434.3 871.2,435.9 870.6,437.5 873.2,439.6 871.1,441.2 872.2,442.9 870.2,444.7 873.0,446.4 870.7,448.4 872.0,450.1 870.5,451.7 872.5,453.6 871.0,455.5 873.3,457.3 870.7,458.7 872.6,460.2 872.9,462.0 872.5,463.8 872.7,465.3 870.9,467.3 873.2,468.8 872.7,470.6 872.5,472.4 870.9,474.1 872.6,476.0 871.1,477.8 872.8,479.3 872.0,481.0 872.8,482.9 873.1,484.5 873.6,486.3 873.6,488.1 870.8,489.8 871.8,491.9 871.7,493.6 873.1,495.7 871.3,497.2 873.1,499.2 872.4,501.3 871.9,502.9 871.5,504.7 872.7,506.3 873.0,508.0 872.4,509.5 873.6,511.3 871.2,512.8 872.2,514.7 873.4,516.3 871.4,518.0 873.9,519.7 871.8,521.5 872.5,523.3 872.9,524.7 873.3,526.3 871.7,528.2 873.8,529.7 871.8,531.5 872.1,533.3 871.2,535.2 872.9,537.1 870.8,539.0 871.2,540.5 873.1,542.6 872.4,544.4 874.4,546.4 871.4,547.9 871.8,549.4 871.0,551.0 873.7,552.6 873.4,554.5 873.3,556.5 871.0,558.4 871.2,560.2 871.3,562.2 873.2,564.2 871.5,565.8 873.2,567.7 871.9,569.8 872.8,571.7 871.5,573.3 871.2,575.5 872.4,577.3 871.0,579.1 871.8,581.2 870.7,583.1 872.5,584.7 871.1,586.7 871.1,588.6 872.6,590.4 873.1,592.0 870.8,593.7 872.4,595.6 870.1,597.3 871.1,599.1 871.6,600.8 870.4,602.3 871.1,604.3 871.9,606.2 870.9,608.2 872.2,609.7 870.1,611.2 872.0,612.8 870.4,614.6 870.4,616.3 873.1,617.7 871.1,619.2 872.7,620.9 871.3,622.5 872.1,624.4 871.0,626.4 869.8,628.0 870.0,629.5 871.2,631.2 870.5,632.9 872.7,634.4 871.9,635.9 872.2,637.4 870.1,639.1 872.0,640.5 870.2,642.6 872.6,644.3 870.2,646.4 872.3,648.1 872.1,650.0 871.7,651.6 870.0,653.5 872.5,655.2 871.7,656.8 870.6,658.7 870.4,660.6 872.3,662.4 871.1,663.9 872.7,665.9 870.5,667.7 872.7,669.6 870.3,671.3 870.4,672.9 870.6,674.5 872.1,676.0 871.7,678.0 873.5,679.7 871.6,681.3 870.6,682.7 872.9,684.5 871.1,686.0 872.1,687.5 870.8,689.2 870.3,690.7 872.4,692.6 870.7,694.5 870.6,696.4 869.6,698.4 871.3,700.4 870.3,702.5 870.8,704.5 871.6,706.2 873.0,708.0 872.2,709.9 872.0,711.7 870.8,713.2 872.6,715.0 872.4,716.7 871.9,718.3 871.5,720.5 872.0,722.4 871.4,724.3 872.5,726.1 869.9,728.0 870.3,729.7 871.4,731.5 871.2,733.1 871.9,734.9 870.4,736.7 872.6,738.6 870.7,740.0 871.8,741.9 869.8,743.5 869.9,745.0 871.5,746.8 870.5,748.8 869.9,750.7 870.9,752.2 869.1,754.0 870.4,755.5 870.1,757.2 869.4,759.0 869.7,760.7 869.5,762.7 868.1,764.8 867.8,766.4 866.4,768.4 864.9,770.5 864.5,772.0 862.7,773.7 862.5,775.3 861.6,777.0 860.5,778.0" fill="none" stroke="#e01c1c" stroke-width="1.3" stroke-opacity="0.85" stroke-linejoin="round"/>
<polyline points="935.5,782 936.5,780 939.5,778.3" fill="none" stroke="#50e060" stroke-width="1.2"/>
<circle cx="900.3" cy="45.3" r="2.9" fill="#000" stroke="#c01818" stroke-width="1"/>
<circle cx="901" cy="251" r="1.5" fill="#e01818"/>
</g>
</svg>
</body></html>
